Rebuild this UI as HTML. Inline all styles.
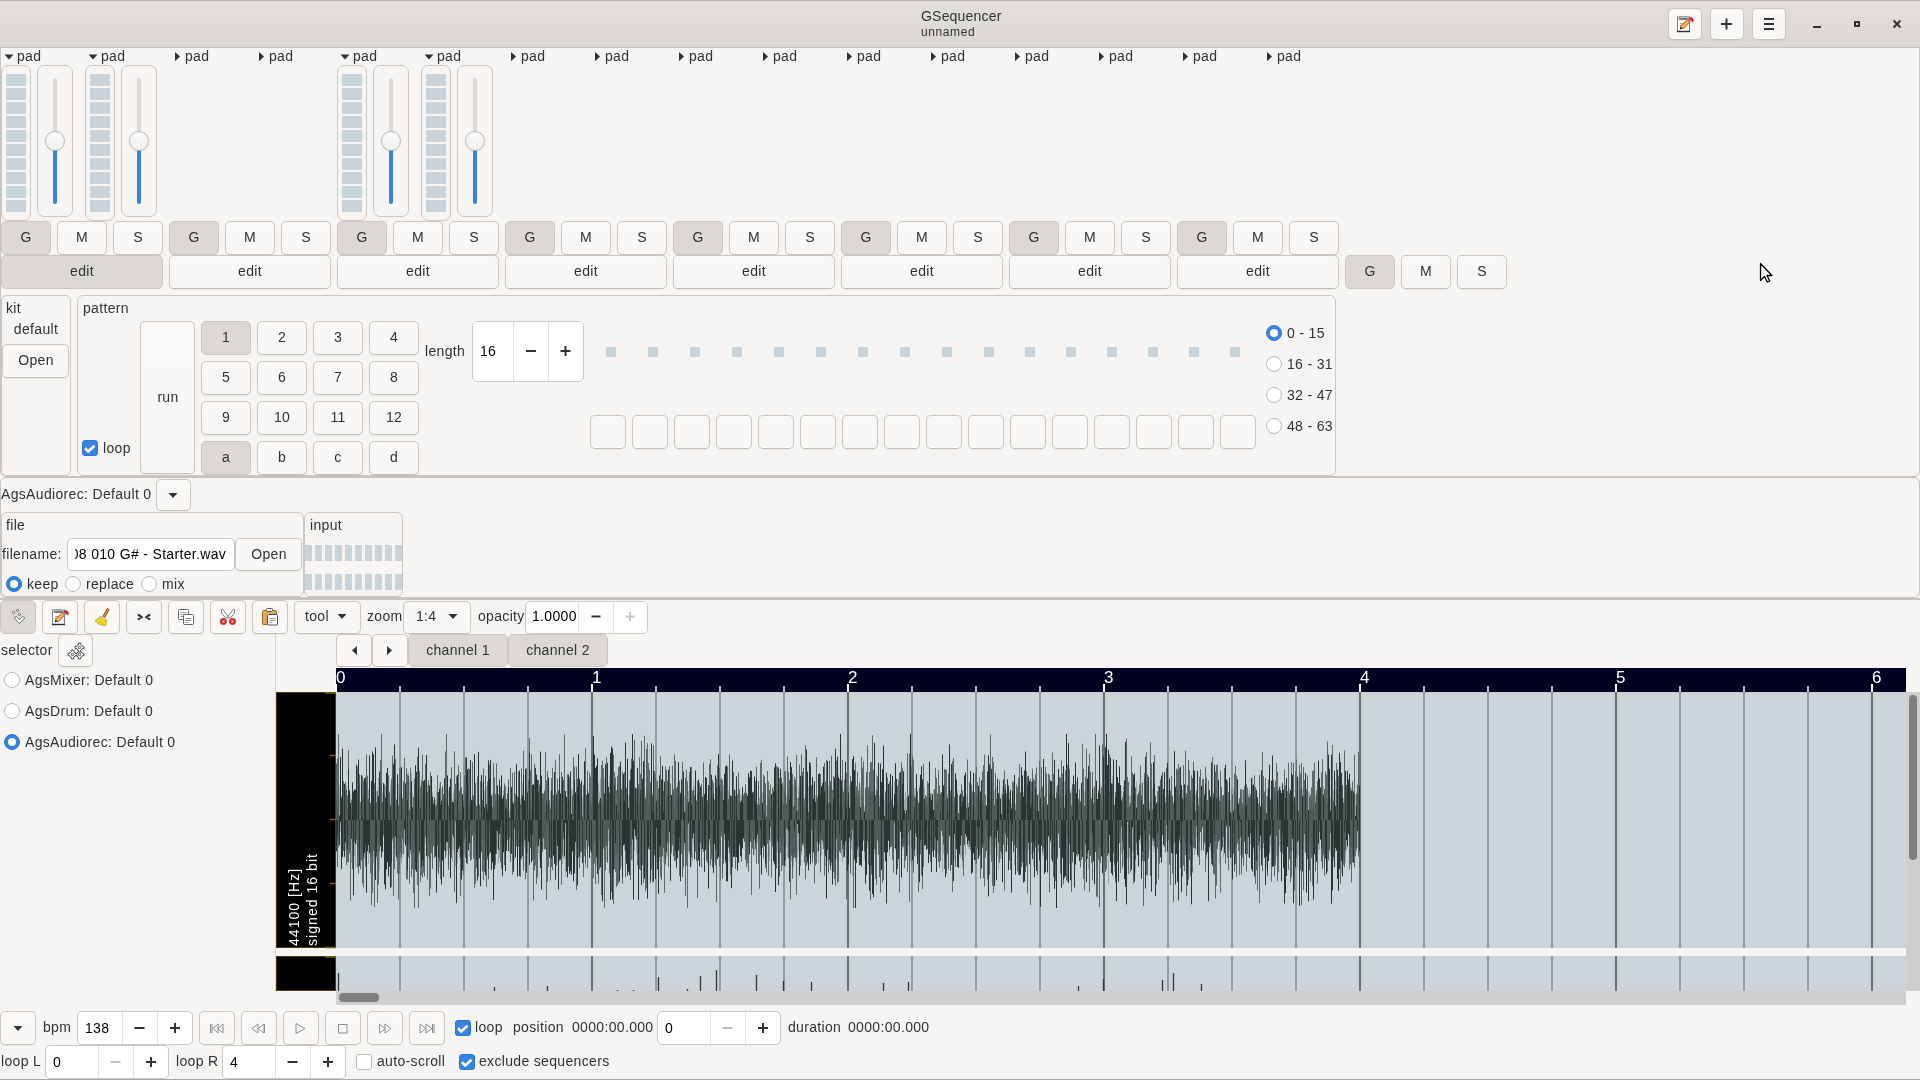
<!DOCTYPE html><html><head><meta charset="utf-8"><style>
*{margin:0;padding:0;box-sizing:border-box}
html,body{width:1920px;height:1080px;overflow:hidden;background:#f6f5f4;font-family:"Liberation Sans",sans-serif;color:#2e3436}
div{position:absolute}
.t{white-space:pre;will-change:transform}
.btn{border:1px solid #cdc7c2;border-bottom-color:#c4beb8;border-radius:5px;background:linear-gradient(to top,#fbfbfa 1px,#f8f7f6 1px,#f9f8f7);box-shadow:0 1px 1px rgba(0,0,0,0.05)}
.chk{background:#dcd8d4;border-color:#cdc7c2;box-shadow:none}
.frame{border:1px solid #cdc7c2;border-radius:6px}
.entry{border:1px solid #cdc7c2;border-radius:5px;background:#fff}
.vsep{width:1px;background:#e4e1de}
.led{background:#c9d3da}
svg{position:absolute;overflow:visible}
</style></head><body>
<div class="" style="left:0px;top:0px;width:1920px;height:48px;background:linear-gradient(to bottom,#e2dfdc,#dbd7d3);border-bottom:1px solid #c4beb8;border-top:1px solid #b1adaa"></div>
<div class="t" style="left:921px;top:9.15px;font-size:14px;line-height:14px;color:#2e3436;letter-spacing:0.2px;">GSequencer</div>
<div class="t" style="left:921px;top:25.84px;font-size:12px;line-height:12px;color:#2e3436;letter-spacing:0.6px;">unnamed</div>
<div class="btn" style="left:1668px;top:8px;width:34px;height:32px;"></div>
<div class="btn" style="left:1710px;top:8px;width:34px;height:32px;"></div>
<div class="btn" style="left:1752px;top:8px;width:34px;height:32px;"></div>
<svg style="left:0;top:0" width="1920" height="48"><path d="M1721 24h11M1726.5 18.5v11" stroke="#2e3436" stroke-width="2"/><path d="M1764 19h10M1764 24h10M1764 29h10" stroke="#2e3436" stroke-width="2"/><path d="M1813 27h8" stroke="#2e3436" stroke-width="2"/><rect x="1855" y="22" width="4" height="4" fill="none" stroke="#2e3436" stroke-width="2"/><path d="M1893.5 20.5l7 7M1900.5 20.5l-7 7" stroke="#2e3436" stroke-width="2"/></svg>
<div class="frame" style="left:0px;top:47px;width:1920px;height:430px;border-color:#c8c3be;border-top-left-radius:0;border-top-right-radius:0"></div>
<div class="frame" style="left:0px;top:477px;width:1920px;height:121px;border-color:#c8c3be"></div>
<div class="" style="left:0px;top:1079px;width:1920px;height:1px;background:#a8a8a8"></div>
<svg style="left:0;top:0" width="1920" height="300"><path d="M4.5 54.4h9l-4.5 5z" fill="#2e3436"/><path d="M88.5 54.4h9l-4.5 5z" fill="#2e3436"/><path d="M175 52v9.2l5-4.6z" fill="#2e3436"/><path d="M259 52v9.2l5-4.6z" fill="#2e3436"/><path d="M340.5 54.4h9l-4.5 5z" fill="#2e3436"/><path d="M424.5 54.4h9l-4.5 5z" fill="#2e3436"/><path d="M511 52v9.2l5-4.6z" fill="#2e3436"/><path d="M595 52v9.2l5-4.6z" fill="#2e3436"/><path d="M679 52v9.2l5-4.6z" fill="#2e3436"/><path d="M763 52v9.2l5-4.6z" fill="#2e3436"/><path d="M847 52v9.2l5-4.6z" fill="#2e3436"/><path d="M931 52v9.2l5-4.6z" fill="#2e3436"/><path d="M1015 52v9.2l5-4.6z" fill="#2e3436"/><path d="M1099 52v9.2l5-4.6z" fill="#2e3436"/><path d="M1183 52v9.2l5-4.6z" fill="#2e3436"/><path d="M1267 52v9.2l5-4.6z" fill="#2e3436"/></svg>
<div class="t" style="left:16.8px;top:49.15px;font-size:14px;line-height:14px;color:#2e3436;letter-spacing:0.33px;">pad</div>
<div class="frame" style="left:1px;top:65px;width:30px;height:156px;border-radius:7px"></div>
<div class="led" style="left:6px;top:74px;width:20px;height:12px;"></div>
<div class="led" style="left:6px;top:88px;width:20px;height:12px;"></div>
<div class="led" style="left:6px;top:102px;width:20px;height:12px;"></div>
<div class="led" style="left:6px;top:116px;width:20px;height:12px;"></div>
<div class="led" style="left:6px;top:130px;width:20px;height:12px;"></div>
<div class="led" style="left:6px;top:144px;width:20px;height:12px;"></div>
<div class="led" style="left:6px;top:158px;width:20px;height:12px;"></div>
<div class="led" style="left:6px;top:172px;width:20px;height:12px;"></div>
<div class="led" style="left:6px;top:186px;width:20px;height:12px;"></div>
<div class="led" style="left:6px;top:200px;width:20px;height:12px;"></div>
<div class="frame" style="left:37px;top:65px;width:36px;height:152px;border-radius:7px"></div>
<div class="" style="left:53px;top:78px;width:4px;height:126px;background:#dedad7;border-radius:2px"></div>
<div class="" style="left:53px;top:141px;width:4px;height:63px;background:#3584e4;border-radius:2px"></div>
<div class="" style="left:45px;top:131px;width:20px;height:20px;border-radius:50%;border:1px solid #bfb8b1;background:linear-gradient(to bottom,#fafafa,#f1f0ee);box-shadow:0 1px 1px rgba(0,0,0,0.08)"></div>
<div class="t" style="left:100.8px;top:49.15px;font-size:14px;line-height:14px;color:#2e3436;letter-spacing:0.33px;">pad</div>
<div class="frame" style="left:85px;top:65px;width:30px;height:156px;border-radius:7px"></div>
<div class="led" style="left:90px;top:74px;width:20px;height:12px;"></div>
<div class="led" style="left:90px;top:88px;width:20px;height:12px;"></div>
<div class="led" style="left:90px;top:102px;width:20px;height:12px;"></div>
<div class="led" style="left:90px;top:116px;width:20px;height:12px;"></div>
<div class="led" style="left:90px;top:130px;width:20px;height:12px;"></div>
<div class="led" style="left:90px;top:144px;width:20px;height:12px;"></div>
<div class="led" style="left:90px;top:158px;width:20px;height:12px;"></div>
<div class="led" style="left:90px;top:172px;width:20px;height:12px;"></div>
<div class="led" style="left:90px;top:186px;width:20px;height:12px;"></div>
<div class="led" style="left:90px;top:200px;width:20px;height:12px;"></div>
<div class="frame" style="left:121px;top:65px;width:36px;height:152px;border-radius:7px"></div>
<div class="" style="left:137px;top:78px;width:4px;height:126px;background:#dedad7;border-radius:2px"></div>
<div class="" style="left:137px;top:141px;width:4px;height:63px;background:#3584e4;border-radius:2px"></div>
<div class="" style="left:129px;top:131px;width:20px;height:20px;border-radius:50%;border:1px solid #bfb8b1;background:linear-gradient(to bottom,#fafafa,#f1f0ee);box-shadow:0 1px 1px rgba(0,0,0,0.08)"></div>
<div class="t" style="left:184.8px;top:49.15px;font-size:14px;line-height:14px;color:#2e3436;letter-spacing:0.33px;">pad</div>
<div class="t" style="left:268.8px;top:49.15px;font-size:14px;line-height:14px;color:#2e3436;letter-spacing:0.33px;">pad</div>
<div class="t" style="left:352.8px;top:49.15px;font-size:14px;line-height:14px;color:#2e3436;letter-spacing:0.33px;">pad</div>
<div class="frame" style="left:337px;top:65px;width:30px;height:156px;border-radius:7px"></div>
<div class="led" style="left:342px;top:74px;width:20px;height:12px;"></div>
<div class="led" style="left:342px;top:88px;width:20px;height:12px;"></div>
<div class="led" style="left:342px;top:102px;width:20px;height:12px;"></div>
<div class="led" style="left:342px;top:116px;width:20px;height:12px;"></div>
<div class="led" style="left:342px;top:130px;width:20px;height:12px;"></div>
<div class="led" style="left:342px;top:144px;width:20px;height:12px;"></div>
<div class="led" style="left:342px;top:158px;width:20px;height:12px;"></div>
<div class="led" style="left:342px;top:172px;width:20px;height:12px;"></div>
<div class="led" style="left:342px;top:186px;width:20px;height:12px;"></div>
<div class="led" style="left:342px;top:200px;width:20px;height:12px;"></div>
<div class="frame" style="left:373px;top:65px;width:36px;height:152px;border-radius:7px"></div>
<div class="" style="left:389px;top:78px;width:4px;height:126px;background:#dedad7;border-radius:2px"></div>
<div class="" style="left:389px;top:141px;width:4px;height:63px;background:#3584e4;border-radius:2px"></div>
<div class="" style="left:381px;top:131px;width:20px;height:20px;border-radius:50%;border:1px solid #bfb8b1;background:linear-gradient(to bottom,#fafafa,#f1f0ee);box-shadow:0 1px 1px rgba(0,0,0,0.08)"></div>
<div class="t" style="left:436.8px;top:49.15px;font-size:14px;line-height:14px;color:#2e3436;letter-spacing:0.33px;">pad</div>
<div class="frame" style="left:421px;top:65px;width:30px;height:156px;border-radius:7px"></div>
<div class="led" style="left:426px;top:74px;width:20px;height:12px;"></div>
<div class="led" style="left:426px;top:88px;width:20px;height:12px;"></div>
<div class="led" style="left:426px;top:102px;width:20px;height:12px;"></div>
<div class="led" style="left:426px;top:116px;width:20px;height:12px;"></div>
<div class="led" style="left:426px;top:130px;width:20px;height:12px;"></div>
<div class="led" style="left:426px;top:144px;width:20px;height:12px;"></div>
<div class="led" style="left:426px;top:158px;width:20px;height:12px;"></div>
<div class="led" style="left:426px;top:172px;width:20px;height:12px;"></div>
<div class="led" style="left:426px;top:186px;width:20px;height:12px;"></div>
<div class="led" style="left:426px;top:200px;width:20px;height:12px;"></div>
<div class="frame" style="left:457px;top:65px;width:36px;height:152px;border-radius:7px"></div>
<div class="" style="left:473px;top:78px;width:4px;height:126px;background:#dedad7;border-radius:2px"></div>
<div class="" style="left:473px;top:141px;width:4px;height:63px;background:#3584e4;border-radius:2px"></div>
<div class="" style="left:465px;top:131px;width:20px;height:20px;border-radius:50%;border:1px solid #bfb8b1;background:linear-gradient(to bottom,#fafafa,#f1f0ee);box-shadow:0 1px 1px rgba(0,0,0,0.08)"></div>
<div class="t" style="left:520.8px;top:49.15px;font-size:14px;line-height:14px;color:#2e3436;letter-spacing:0.33px;">pad</div>
<div class="t" style="left:604.8px;top:49.15px;font-size:14px;line-height:14px;color:#2e3436;letter-spacing:0.33px;">pad</div>
<div class="t" style="left:688.8px;top:49.15px;font-size:14px;line-height:14px;color:#2e3436;letter-spacing:0.33px;">pad</div>
<div class="t" style="left:772.8px;top:49.15px;font-size:14px;line-height:14px;color:#2e3436;letter-spacing:0.33px;">pad</div>
<div class="t" style="left:856.8px;top:49.15px;font-size:14px;line-height:14px;color:#2e3436;letter-spacing:0.33px;">pad</div>
<div class="t" style="left:940.8px;top:49.15px;font-size:14px;line-height:14px;color:#2e3436;letter-spacing:0.33px;">pad</div>
<div class="t" style="left:1024.8px;top:49.15px;font-size:14px;line-height:14px;color:#2e3436;letter-spacing:0.33px;">pad</div>
<div class="t" style="left:1108.8px;top:49.15px;font-size:14px;line-height:14px;color:#2e3436;letter-spacing:0.33px;">pad</div>
<div class="t" style="left:1192.8px;top:49.15px;font-size:14px;line-height:14px;color:#2e3436;letter-spacing:0.33px;">pad</div>
<div class="t" style="left:1276.8px;top:49.15px;font-size:14px;line-height:14px;color:#2e3436;letter-spacing:0.33px;">pad</div>
<div class="btn chk" style="left:1px;top:221px;width:50px;height:34px;"></div>
<div class="t" style="left:-174.0px;width:400px;text-align:center;top:230.15px;font-size:14px;line-height:14px;color:#2e3436;letter-spacing:0.33px;">G</div>
<div class="btn" style="left:57px;top:221px;width:50px;height:34px;"></div>
<div class="t" style="left:-118.0px;width:400px;text-align:center;top:230.15px;font-size:14px;line-height:14px;color:#2e3436;letter-spacing:0.33px;">M</div>
<div class="btn" style="left:113px;top:221px;width:50px;height:34px;"></div>
<div class="t" style="left:-62.0px;width:400px;text-align:center;top:230.15px;font-size:14px;line-height:14px;color:#2e3436;letter-spacing:0.33px;">S</div>
<div class="btn chk" style="left:1px;top:255px;width:162px;height:34px;"></div>
<div class="t" style="left:-118.0px;width:400px;text-align:center;top:264.15px;font-size:14px;line-height:14px;color:#2e3436;letter-spacing:0.33px;">edit</div>
<div class="btn chk" style="left:169px;top:221px;width:50px;height:34px;"></div>
<div class="t" style="left:-6.0px;width:400px;text-align:center;top:230.15px;font-size:14px;line-height:14px;color:#2e3436;letter-spacing:0.33px;">G</div>
<div class="btn" style="left:225px;top:221px;width:50px;height:34px;"></div>
<div class="t" style="left:50.0px;width:400px;text-align:center;top:230.15px;font-size:14px;line-height:14px;color:#2e3436;letter-spacing:0.33px;">M</div>
<div class="btn" style="left:281px;top:221px;width:50px;height:34px;"></div>
<div class="t" style="left:106.0px;width:400px;text-align:center;top:230.15px;font-size:14px;line-height:14px;color:#2e3436;letter-spacing:0.33px;">S</div>
<div class="btn" style="left:169px;top:255px;width:162px;height:34px;"></div>
<div class="t" style="left:50.0px;width:400px;text-align:center;top:264.15px;font-size:14px;line-height:14px;color:#2e3436;letter-spacing:0.33px;">edit</div>
<div class="btn chk" style="left:337px;top:221px;width:50px;height:34px;"></div>
<div class="t" style="left:162.0px;width:400px;text-align:center;top:230.15px;font-size:14px;line-height:14px;color:#2e3436;letter-spacing:0.33px;">G</div>
<div class="btn" style="left:393px;top:221px;width:50px;height:34px;"></div>
<div class="t" style="left:218.0px;width:400px;text-align:center;top:230.15px;font-size:14px;line-height:14px;color:#2e3436;letter-spacing:0.33px;">M</div>
<div class="btn" style="left:449px;top:221px;width:50px;height:34px;"></div>
<div class="t" style="left:274.0px;width:400px;text-align:center;top:230.15px;font-size:14px;line-height:14px;color:#2e3436;letter-spacing:0.33px;">S</div>
<div class="btn" style="left:337px;top:255px;width:162px;height:34px;"></div>
<div class="t" style="left:218.0px;width:400px;text-align:center;top:264.15px;font-size:14px;line-height:14px;color:#2e3436;letter-spacing:0.33px;">edit</div>
<div class="btn chk" style="left:505px;top:221px;width:50px;height:34px;"></div>
<div class="t" style="left:330.0px;width:400px;text-align:center;top:230.15px;font-size:14px;line-height:14px;color:#2e3436;letter-spacing:0.33px;">G</div>
<div class="btn" style="left:561px;top:221px;width:50px;height:34px;"></div>
<div class="t" style="left:386.0px;width:400px;text-align:center;top:230.15px;font-size:14px;line-height:14px;color:#2e3436;letter-spacing:0.33px;">M</div>
<div class="btn" style="left:617px;top:221px;width:50px;height:34px;"></div>
<div class="t" style="left:442.0px;width:400px;text-align:center;top:230.15px;font-size:14px;line-height:14px;color:#2e3436;letter-spacing:0.33px;">S</div>
<div class="btn" style="left:505px;top:255px;width:162px;height:34px;"></div>
<div class="t" style="left:386.0px;width:400px;text-align:center;top:264.15px;font-size:14px;line-height:14px;color:#2e3436;letter-spacing:0.33px;">edit</div>
<div class="btn chk" style="left:673px;top:221px;width:50px;height:34px;"></div>
<div class="t" style="left:498.0px;width:400px;text-align:center;top:230.15px;font-size:14px;line-height:14px;color:#2e3436;letter-spacing:0.33px;">G</div>
<div class="btn" style="left:729px;top:221px;width:50px;height:34px;"></div>
<div class="t" style="left:554.0px;width:400px;text-align:center;top:230.15px;font-size:14px;line-height:14px;color:#2e3436;letter-spacing:0.33px;">M</div>
<div class="btn" style="left:785px;top:221px;width:50px;height:34px;"></div>
<div class="t" style="left:610.0px;width:400px;text-align:center;top:230.15px;font-size:14px;line-height:14px;color:#2e3436;letter-spacing:0.33px;">S</div>
<div class="btn" style="left:673px;top:255px;width:162px;height:34px;"></div>
<div class="t" style="left:554.0px;width:400px;text-align:center;top:264.15px;font-size:14px;line-height:14px;color:#2e3436;letter-spacing:0.33px;">edit</div>
<div class="btn chk" style="left:841px;top:221px;width:50px;height:34px;"></div>
<div class="t" style="left:666.0px;width:400px;text-align:center;top:230.15px;font-size:14px;line-height:14px;color:#2e3436;letter-spacing:0.33px;">G</div>
<div class="btn" style="left:897px;top:221px;width:50px;height:34px;"></div>
<div class="t" style="left:722.0px;width:400px;text-align:center;top:230.15px;font-size:14px;line-height:14px;color:#2e3436;letter-spacing:0.33px;">M</div>
<div class="btn" style="left:953px;top:221px;width:50px;height:34px;"></div>
<div class="t" style="left:778.0px;width:400px;text-align:center;top:230.15px;font-size:14px;line-height:14px;color:#2e3436;letter-spacing:0.33px;">S</div>
<div class="btn" style="left:841px;top:255px;width:162px;height:34px;"></div>
<div class="t" style="left:722.0px;width:400px;text-align:center;top:264.15px;font-size:14px;line-height:14px;color:#2e3436;letter-spacing:0.33px;">edit</div>
<div class="btn chk" style="left:1009px;top:221px;width:50px;height:34px;"></div>
<div class="t" style="left:834.0px;width:400px;text-align:center;top:230.15px;font-size:14px;line-height:14px;color:#2e3436;letter-spacing:0.33px;">G</div>
<div class="btn" style="left:1065px;top:221px;width:50px;height:34px;"></div>
<div class="t" style="left:890.0px;width:400px;text-align:center;top:230.15px;font-size:14px;line-height:14px;color:#2e3436;letter-spacing:0.33px;">M</div>
<div class="btn" style="left:1121px;top:221px;width:50px;height:34px;"></div>
<div class="t" style="left:946.0px;width:400px;text-align:center;top:230.15px;font-size:14px;line-height:14px;color:#2e3436;letter-spacing:0.33px;">S</div>
<div class="btn" style="left:1009px;top:255px;width:162px;height:34px;"></div>
<div class="t" style="left:890.0px;width:400px;text-align:center;top:264.15px;font-size:14px;line-height:14px;color:#2e3436;letter-spacing:0.33px;">edit</div>
<div class="btn chk" style="left:1177px;top:221px;width:50px;height:34px;"></div>
<div class="t" style="left:1002.0px;width:400px;text-align:center;top:230.15px;font-size:14px;line-height:14px;color:#2e3436;letter-spacing:0.33px;">G</div>
<div class="btn" style="left:1233px;top:221px;width:50px;height:34px;"></div>
<div class="t" style="left:1058.0px;width:400px;text-align:center;top:230.15px;font-size:14px;line-height:14px;color:#2e3436;letter-spacing:0.33px;">M</div>
<div class="btn" style="left:1289px;top:221px;width:50px;height:34px;"></div>
<div class="t" style="left:1114.0px;width:400px;text-align:center;top:230.15px;font-size:14px;line-height:14px;color:#2e3436;letter-spacing:0.33px;">S</div>
<div class="btn" style="left:1177px;top:255px;width:162px;height:34px;"></div>
<div class="t" style="left:1058.0px;width:400px;text-align:center;top:264.15px;font-size:14px;line-height:14px;color:#2e3436;letter-spacing:0.33px;">edit</div>
<div class="btn chk" style="left:1345px;top:255px;width:50px;height:34px;"></div>
<div class="t" style="left:1170.0px;width:400px;text-align:center;top:264.15px;font-size:14px;line-height:14px;color:#2e3436;letter-spacing:0.33px;">G</div>
<div class="btn" style="left:1401px;top:255px;width:50px;height:34px;"></div>
<div class="t" style="left:1226.0px;width:400px;text-align:center;top:264.15px;font-size:14px;line-height:14px;color:#2e3436;letter-spacing:0.33px;">M</div>
<div class="btn" style="left:1457px;top:255px;width:50px;height:34px;"></div>
<div class="t" style="left:1282.0px;width:400px;text-align:center;top:264.15px;font-size:14px;line-height:14px;color:#2e3436;letter-spacing:0.33px;">S</div>
<svg style="left:0;top:0" width="1920" height="300"><path d="M1760.5 263.5V280.5L1764.5 276.5L1767.3 282L1769.8 281L1767 275.5H1772Z" fill="#fff" stroke="#000" stroke-width="1.3" stroke-linejoin="round"/></svg>
<div class="frame" style="left:1px;top:295px;width:70px;height:181px;"></div>
<div class="t" style="left:6px;top:301.15px;font-size:14px;line-height:14px;color:#2e3436;letter-spacing:0.33px;">kit</div>
<div class="t" style="left:-164px;width:400px;text-align:center;top:322.15px;font-size:14px;line-height:14px;color:#2e3436;letter-spacing:0.33px;">default</div>
<div class="btn" style="left:2px;top:344px;width:67px;height:34px;"></div>
<div class="t" style="left:-164.5px;width:400px;text-align:center;top:353.15px;font-size:14px;line-height:14px;color:#2e3436;letter-spacing:0.33px;">Open</div>
<div class="frame" style="left:77px;top:295px;width:1259px;height:181px;"></div>
<div class="t" style="left:82.5px;top:301.15px;font-size:14px;line-height:14px;color:#2e3436;letter-spacing:0.33px;">pattern</div>
<div class="btn" style="left:140px;top:321px;width:55px;height:153px;"></div>
<div class="t" style="left:-32.5px;width:400px;text-align:center;top:389.65px;font-size:14px;line-height:14px;color:#2e3436;letter-spacing:0.33px;">run</div>
<div class="" style="left:82px;top:440px;width:16px;height:16px;background:#3584e4;border-radius:3px;border:1px solid #2a76d6"></div>
<svg style="left:82px;top:440px" width="16" height="16"><path d="M3 8.2l3.2 3.2 6.3-5.7" fill="none" stroke="#fff" stroke-width="2.7"/></svg>
<div class="t" style="left:102.5px;top:441.15px;font-size:14px;line-height:14px;color:#2e3436;letter-spacing:0.33px;">loop</div>
<div class="btn chk" style="left:201px;top:321px;width:50px;height:34px;"></div>
<div class="t" style="left:26.0px;width:400px;text-align:center;top:330.15px;font-size:14px;line-height:14px;color:#2e3436;letter-spacing:0.33px;">1</div>
<div class="btn" style="left:257px;top:321px;width:50px;height:34px;"></div>
<div class="t" style="left:82.0px;width:400px;text-align:center;top:330.15px;font-size:14px;line-height:14px;color:#2e3436;letter-spacing:0.33px;">2</div>
<div class="btn" style="left:313px;top:321px;width:50px;height:34px;"></div>
<div class="t" style="left:138.0px;width:400px;text-align:center;top:330.15px;font-size:14px;line-height:14px;color:#2e3436;letter-spacing:0.33px;">3</div>
<div class="btn" style="left:369px;top:321px;width:50px;height:34px;"></div>
<div class="t" style="left:194.0px;width:400px;text-align:center;top:330.15px;font-size:14px;line-height:14px;color:#2e3436;letter-spacing:0.33px;">4</div>
<div class="btn" style="left:201px;top:361px;width:50px;height:34px;"></div>
<div class="t" style="left:26.0px;width:400px;text-align:center;top:370.15px;font-size:14px;line-height:14px;color:#2e3436;letter-spacing:0.33px;">5</div>
<div class="btn" style="left:257px;top:361px;width:50px;height:34px;"></div>
<div class="t" style="left:82.0px;width:400px;text-align:center;top:370.15px;font-size:14px;line-height:14px;color:#2e3436;letter-spacing:0.33px;">6</div>
<div class="btn" style="left:313px;top:361px;width:50px;height:34px;"></div>
<div class="t" style="left:138.0px;width:400px;text-align:center;top:370.15px;font-size:14px;line-height:14px;color:#2e3436;letter-spacing:0.33px;">7</div>
<div class="btn" style="left:369px;top:361px;width:50px;height:34px;"></div>
<div class="t" style="left:194.0px;width:400px;text-align:center;top:370.15px;font-size:14px;line-height:14px;color:#2e3436;letter-spacing:0.33px;">8</div>
<div class="btn" style="left:201px;top:401px;width:50px;height:34px;"></div>
<div class="t" style="left:26.0px;width:400px;text-align:center;top:410.15px;font-size:14px;line-height:14px;color:#2e3436;letter-spacing:0.33px;">9</div>
<div class="btn" style="left:257px;top:401px;width:50px;height:34px;"></div>
<div class="t" style="left:82.0px;width:400px;text-align:center;top:410.15px;font-size:14px;line-height:14px;color:#2e3436;letter-spacing:0.33px;">10</div>
<div class="btn" style="left:313px;top:401px;width:50px;height:34px;"></div>
<div class="t" style="left:138.0px;width:400px;text-align:center;top:410.15px;font-size:14px;line-height:14px;color:#2e3436;letter-spacing:0.33px;">11</div>
<div class="btn" style="left:369px;top:401px;width:50px;height:34px;"></div>
<div class="t" style="left:194.0px;width:400px;text-align:center;top:410.15px;font-size:14px;line-height:14px;color:#2e3436;letter-spacing:0.33px;">12</div>
<div class="btn chk" style="left:201px;top:441px;width:50px;height:34px;"></div>
<div class="t" style="left:26.0px;width:400px;text-align:center;top:450.15px;font-size:14px;line-height:14px;color:#2e3436;letter-spacing:0.33px;">a</div>
<div class="btn" style="left:257px;top:441px;width:50px;height:34px;"></div>
<div class="t" style="left:82.0px;width:400px;text-align:center;top:450.15px;font-size:14px;line-height:14px;color:#2e3436;letter-spacing:0.33px;">b</div>
<div class="btn" style="left:313px;top:441px;width:50px;height:34px;"></div>
<div class="t" style="left:138.0px;width:400px;text-align:center;top:450.15px;font-size:14px;line-height:14px;color:#2e3436;letter-spacing:0.33px;">c</div>
<div class="btn" style="left:369px;top:441px;width:50px;height:34px;"></div>
<div class="t" style="left:194.0px;width:400px;text-align:center;top:450.15px;font-size:14px;line-height:14px;color:#2e3436;letter-spacing:0.33px;">d</div>
<div class="t" style="left:425px;top:344.15px;font-size:14px;line-height:14px;color:#2e3436;letter-spacing:0.33px;">length</div>
<div class="entry" style="left:472px;top:321px;width:112px;height:61px;"></div>
<div class="vsep" style="left:513px;top:322px;width:1px;height:59px;"></div>
<div class="vsep" style="left:548px;top:322px;width:1px;height:59px;"></div>
<div class="t" style="left:479.5px;top:344.15px;font-size:14px;line-height:14px;color:#000;letter-spacing:0.33px;">16</div>
<svg style="left:0;top:0" width="600" height="400"><path d="M526 351h10M560.5 351h10M565.5 346v10" stroke="#2e3436" stroke-width="2"/></svg>
<div class="led" style="left:606px;top:347px;width:10px;height:10px;"></div>
<div class="btn" style="left:590px;top:415px;width:36px;height:34px;"></div>
<div class="led" style="left:648px;top:347px;width:10px;height:10px;"></div>
<div class="btn" style="left:632px;top:415px;width:36px;height:34px;"></div>
<div class="led" style="left:690px;top:347px;width:10px;height:10px;"></div>
<div class="btn" style="left:674px;top:415px;width:36px;height:34px;"></div>
<div class="led" style="left:732px;top:347px;width:10px;height:10px;"></div>
<div class="btn" style="left:716px;top:415px;width:36px;height:34px;"></div>
<div class="led" style="left:774px;top:347px;width:10px;height:10px;"></div>
<div class="btn" style="left:758px;top:415px;width:36px;height:34px;"></div>
<div class="led" style="left:816px;top:347px;width:10px;height:10px;"></div>
<div class="btn" style="left:800px;top:415px;width:36px;height:34px;"></div>
<div class="led" style="left:858px;top:347px;width:10px;height:10px;"></div>
<div class="btn" style="left:842px;top:415px;width:36px;height:34px;"></div>
<div class="led" style="left:900px;top:347px;width:10px;height:10px;"></div>
<div class="btn" style="left:884px;top:415px;width:36px;height:34px;"></div>
<div class="led" style="left:942px;top:347px;width:10px;height:10px;"></div>
<div class="btn" style="left:926px;top:415px;width:36px;height:34px;"></div>
<div class="led" style="left:984px;top:347px;width:10px;height:10px;"></div>
<div class="btn" style="left:968px;top:415px;width:36px;height:34px;"></div>
<div class="led" style="left:1025px;top:347px;width:10px;height:10px;"></div>
<div class="btn" style="left:1010px;top:415px;width:36px;height:34px;"></div>
<div class="led" style="left:1066px;top:347px;width:10px;height:10px;"></div>
<div class="btn" style="left:1052px;top:415px;width:36px;height:34px;"></div>
<div class="led" style="left:1107px;top:347px;width:10px;height:10px;"></div>
<div class="btn" style="left:1094px;top:415px;width:36px;height:34px;"></div>
<div class="led" style="left:1148px;top:347px;width:10px;height:10px;"></div>
<div class="btn" style="left:1136px;top:415px;width:36px;height:34px;"></div>
<div class="led" style="left:1189px;top:347px;width:10px;height:10px;"></div>
<div class="btn" style="left:1178px;top:415px;width:36px;height:34px;"></div>
<div class="led" style="left:1230px;top:347px;width:10px;height:10px;"></div>
<div class="btn" style="left:1220px;top:415px;width:36px;height:34px;"></div>
<div class="" style="left:1266px;top:325px;width:16px;height:16px;border-radius:50%;background:#3584e4;border:1px solid #2a76d6"></div>
<div class="" style="left:1270px;top:329px;width:8px;height:8px;border-radius:50%;background:#fff"></div>
<div class="t" style="left:1287px;top:326.15px;font-size:14px;line-height:14px;color:#2e3436;letter-spacing:0.33px;">0 - 15</div>
<div class="" style="left:1266px;top:356px;width:16px;height:16px;border-radius:50%;background:#fff;border:1px solid #bfb8b1"></div>
<div class="t" style="left:1287px;top:357.15px;font-size:14px;line-height:14px;color:#2e3436;letter-spacing:0.33px;">16 - 31</div>
<div class="" style="left:1266px;top:387px;width:16px;height:16px;border-radius:50%;background:#fff;border:1px solid #bfb8b1"></div>
<div class="t" style="left:1287px;top:388.15px;font-size:14px;line-height:14px;color:#2e3436;letter-spacing:0.33px;">32 - 47</div>
<div class="" style="left:1266px;top:418px;width:16px;height:16px;border-radius:50%;background:#fff;border:1px solid #bfb8b1"></div>
<div class="t" style="left:1287px;top:419.15px;font-size:14px;line-height:14px;color:#2e3436;letter-spacing:0.33px;">48 - 63</div>
<div class="t" style="left:1px;top:486.65px;font-size:14px;line-height:14px;color:#2e3436;letter-spacing:0.33px;">AgsAudiorec: Default 0</div>
<div class="btn" style="left:156px;top:479px;width:35px;height:32px;"></div>
<svg style="left:0;top:0" width="400" height="520"><path d="M168.5 493h9l-4.5 5z" fill="#2e3436"/></svg>
<div class="frame" style="left:1px;top:512px;width:303px;height:85px;"></div>
<div class="t" style="left:6px;top:518.15px;font-size:14px;line-height:14px;color:#2e3436;letter-spacing:0.33px;">file</div>
<div class="t" style="left:2px;top:547.15px;font-size:14px;line-height:14px;color:#2e3436;letter-spacing:0.33px;">filename:</div>
<div class="entry" style="left:67px;top:538px;width:168px;height:33px;overflow:hidden"></div>
<div class="t" style="left:75px;top:541px;width:157px;height:26px;overflow:hidden"><div class="t" style="right:6px;top:6px;font-size:14px;line-height:14px;letter-spacing:0.33px;color:#000">03 0008 010 G# - Starter.wav</div></div>
<div class="btn" style="left:235px;top:538px;width:67px;height:33px;"></div>
<div class="t" style="left:68.5px;width:400px;text-align:center;top:546.65px;font-size:14px;line-height:14px;color:#2e3436;letter-spacing:0.33px;">Open</div>
<div class="" style="left:6px;top:576px;width:16px;height:16px;border-radius:50%;background:#3584e4;border:1px solid #2a76d6"></div>
<div class="" style="left:10px;top:580px;width:8px;height:8px;border-radius:50%;background:#fff"></div>
<div class="t" style="left:26.5px;top:577.15px;font-size:14px;line-height:14px;color:#2e3436;letter-spacing:0.33px;">keep</div>
<div class="" style="left:65px;top:576px;width:16px;height:16px;border-radius:50%;background:#fff;border:1px solid #bfb8b1"></div>
<div class="t" style="left:85.5px;top:577.15px;font-size:14px;line-height:14px;color:#2e3436;letter-spacing:0.33px;">replace</div>
<div class="" style="left:141px;top:576px;width:16px;height:16px;border-radius:50%;background:#fff;border:1px solid #bfb8b1"></div>
<div class="t" style="left:161.5px;top:577.15px;font-size:14px;line-height:14px;color:#2e3436;letter-spacing:0.33px;">mix</div>
<div class="frame" style="left:304px;top:512px;width:99px;height:85px;"></div>
<div class="t" style="left:309.5px;top:518.15px;font-size:14px;line-height:14px;color:#2e3436;letter-spacing:0.33px;">input</div>
<div class="led" style="left:305px;top:545px;width:7px;height:16px;"></div>
<div class="led" style="left:305px;top:574px;width:7px;height:16px;"></div>
<div class="led" style="left:315px;top:545px;width:7px;height:16px;"></div>
<div class="led" style="left:315px;top:574px;width:7px;height:16px;"></div>
<div class="led" style="left:325px;top:545px;width:7px;height:16px;"></div>
<div class="led" style="left:325px;top:574px;width:7px;height:16px;"></div>
<div class="led" style="left:335px;top:545px;width:7px;height:16px;"></div>
<div class="led" style="left:335px;top:574px;width:7px;height:16px;"></div>
<div class="led" style="left:345px;top:545px;width:7px;height:16px;"></div>
<div class="led" style="left:345px;top:574px;width:7px;height:16px;"></div>
<div class="led" style="left:355px;top:545px;width:7px;height:16px;"></div>
<div class="led" style="left:355px;top:574px;width:7px;height:16px;"></div>
<div class="led" style="left:365px;top:545px;width:7px;height:16px;"></div>
<div class="led" style="left:365px;top:574px;width:7px;height:16px;"></div>
<div class="led" style="left:375px;top:545px;width:7px;height:16px;"></div>
<div class="led" style="left:375px;top:574px;width:7px;height:16px;"></div>
<div class="led" style="left:385px;top:545px;width:7px;height:16px;"></div>
<div class="led" style="left:385px;top:574px;width:7px;height:16px;"></div>
<div class="led" style="left:395px;top:545px;width:7px;height:16px;"></div>
<div class="led" style="left:395px;top:574px;width:7px;height:16px;"></div>
<div class="" style="left:0px;top:598px;width:1920px;height:2px;background:#c9c4be"></div>
<div class="btn chk" style="left:0px;top:600px;width:36px;height:34px;"></div>
<div class="btn" style="left:42px;top:600px;width:36px;height:34px;"></div>
<div class="btn" style="left:84px;top:600px;width:36px;height:34px;"></div>
<div class="btn" style="left:126px;top:600px;width:36px;height:34px;"></div>
<div class="btn" style="left:168px;top:600px;width:36px;height:34px;"></div>
<div class="btn" style="left:210px;top:600px;width:36px;height:34px;"></div>
<div class="btn" style="left:252px;top:600px;width:36px;height:34px;"></div>
<div class="btn" style="left:294px;top:601px;width:67px;height:33px;"></div>
<div class="t" style="left:305px;top:609.15px;font-size:14px;line-height:14px;color:#2e3436;letter-spacing:0.33px;">tool</div>
<div class="t" style="left:367px;top:609.15px;font-size:14px;line-height:14px;color:#2e3436;letter-spacing:0.33px;">zoom</div>
<div class="btn" style="left:403px;top:601px;width:68px;height:33px;"></div>
<div class="t" style="left:415.5px;top:609.15px;font-size:14px;line-height:14px;color:#2e3436;letter-spacing:0.33px;">1:4</div>
<svg style="left:0;top:0" width="700" height="700"><path d="M337.5 614h9l-4.5 5zM448.5 614h9l-4.5 5z" fill="#2e3436"/></svg>
<div class="t" style="left:477.5px;top:609.15px;font-size:14px;line-height:14px;color:#2e3436;letter-spacing:0.33px;">opacity</div>
<div class="entry" style="left:525px;top:601px;width:123px;height:33px;"></div>
<div class="vsep" style="left:578px;top:602px;width:1px;height:31px;"></div>
<div class="vsep" style="left:613px;top:602px;width:1px;height:31px;"></div>
<div class="t" style="left:532px;top:609.15px;font-size:14px;line-height:14px;color:#000;letter-spacing:0.33px;">1.0000</div>
<svg style="left:0;top:0" width="700" height="700"><path d="M591.5 616.5h9" stroke="#2e3436" stroke-width="2"/><path d="M625.5 616.5h9M630 612v9" stroke="#c8c6c4" stroke-width="2"/></svg>
<div class="t" style="left:0.5px;top:643.15px;font-size:14px;line-height:14px;color:#2e3436;letter-spacing:0.33px;">selector</div>
<div class="btn" style="left:58px;top:634px;width:35px;height:33px;"></div>
<div class="btn" style="left:336px;top:634px;width:36px;height:33px;"></div>
<div class="btn" style="left:372px;top:634px;width:36px;height:33px;"></div>
<div class="btn chk" style="left:408px;top:634px;width:100px;height:33px;"></div>
<div class="t" style="left:258.0px;width:400px;text-align:center;top:642.65px;font-size:14px;line-height:14px;color:#2e3436;letter-spacing:0.33px;">channel 1</div>
<div class="btn chk" style="left:508px;top:634px;width:100px;height:33px;"></div>
<div class="t" style="left:358.0px;width:400px;text-align:center;top:642.65px;font-size:14px;line-height:14px;color:#2e3436;letter-spacing:0.33px;">channel 2</div>
<svg style="left:0;top:0" width="700" height="700"><path d="M357 646v9l-5-4.5zM387 646l5 4.5l-5 4.5z" fill="#2e3436"/></svg>
<div class="" style="left:275px;top:634px;width:1px;height:357px;background:#d5d1cd"></div>
<div class="" style="left:4px;top:672px;width:16px;height:16px;border-radius:50%;background:#fff;border:1px solid #bfb8b1"></div>
<div class="t" style="left:24.5px;top:673.15px;font-size:14px;line-height:14px;color:#2e3436;letter-spacing:0.33px;">AgsMixer: Default 0</div>
<div class="" style="left:4px;top:703px;width:16px;height:16px;border-radius:50%;background:#fff;border:1px solid #bfb8b1"></div>
<div class="t" style="left:24.5px;top:704.15px;font-size:14px;line-height:14px;color:#2e3436;letter-spacing:0.33px;">AgsDrum: Default 0</div>
<div class="" style="left:4px;top:734px;width:16px;height:16px;border-radius:50%;background:#3584e4;border:1px solid #2a76d6"></div>
<div class="" style="left:8px;top:738px;width:8px;height:8px;border-radius:50%;background:#fff"></div>
<div class="t" style="left:24.5px;top:735.15px;font-size:14px;line-height:14px;color:#2e3436;letter-spacing:0.33px;">AgsAudiorec: Default 0</div>
<div class="btn" style="left:0px;top:1011px;width:36px;height:34px;"></div>
<svg style="left:0;top:0" width="1000" height="1080"><path d="M13.5 1026h9l-4.5 5z" fill="#2e3436"/></svg>
<div class="t" style="left:42.5px;top:1020.15px;font-size:14px;line-height:14px;color:#2e3436;letter-spacing:0.33px;">bpm</div>
<div class="entry" style="left:77px;top:1011px;width:116px;height:34px;"></div>
<div class="vsep" style="left:122px;top:1012px;width:1px;height:32px;"></div>
<div class="vsep" style="left:157px;top:1012px;width:1px;height:32px;"></div>
<div class="t" style="left:84.5px;top:1021.15px;font-size:14px;line-height:14px;color:#000;letter-spacing:0.33px;">138</div>
<svg style="left:0;top:0" width="1920" height="1080"><path d="M134.5 1028.0h10" stroke="#2e3436" stroke-width="2"/><path d="M170.0 1028.0h10M175.0 1023.0v10" stroke="#2e3436" stroke-width="2"/></svg>
<div class="btn" style="left:199px;top:1011px;width:36px;height:34px;"></div>
<div class="btn" style="left:241px;top:1011px;width:36px;height:34px;"></div>
<div class="btn" style="left:283px;top:1011px;width:36px;height:34px;"></div>
<div class="btn" style="left:325px;top:1011px;width:36px;height:34px;"></div>
<div class="btn" style="left:367px;top:1011px;width:36px;height:34px;"></div>
<div class="btn" style="left:409px;top:1011px;width:36px;height:34px;"></div>
<div class="" style="left:455px;top:1020px;width:16px;height:16px;background:#3584e4;border-radius:3px;border:1px solid #2a76d6"></div>
<svg style="left:455px;top:1020px" width="16" height="16"><path d="M3 8.2l3.2 3.2 6.3-5.7" fill="none" stroke="#fff" stroke-width="2.7"/></svg>
<div class="t" style="left:475px;top:1020.15px;font-size:14px;line-height:14px;color:#2e3436;letter-spacing:0.33px;">loop</div>
<div class="t" style="left:513.4px;top:1020.15px;font-size:14px;line-height:14px;color:#2e3436;letter-spacing:0.33px;">position</div>
<div class="t" style="left:571.5px;top:1020.15px;font-size:14px;line-height:14px;color:#2e3436;letter-spacing:0.33px;">0000:00.000</div>
<div class="entry" style="left:657px;top:1011px;width:124px;height:34px;"></div>
<div class="vsep" style="left:710px;top:1012px;width:1px;height:32px;"></div>
<div class="vsep" style="left:745px;top:1012px;width:1px;height:32px;"></div>
<div class="t" style="left:664.5px;top:1021.15px;font-size:14px;line-height:14px;color:#000;letter-spacing:0.33px;">0</div>
<svg style="left:0;top:0" width="1920" height="1080"><path d="M722.5 1028.0h10" stroke="#c0bdbb" stroke-width="2"/><path d="M758.0 1028.0h10M763.0 1023.0v10" stroke="#2e3436" stroke-width="2"/></svg>
<div class="t" style="left:787.6px;top:1020.15px;font-size:14px;line-height:14px;color:#2e3436;letter-spacing:0.33px;">duration</div>
<div class="t" style="left:847.5px;top:1020.15px;font-size:14px;line-height:14px;color:#2e3436;letter-spacing:0.33px;">0000:00.000</div>
<div class="t" style="left:0.5px;top:1054.15px;font-size:14px;line-height:14px;color:#2e3436;letter-spacing:0.33px;">loop L</div>
<div class="entry" style="left:45px;top:1045px;width:124px;height:34px;"></div>
<div class="vsep" style="left:98px;top:1046px;width:1px;height:32px;"></div>
<div class="vsep" style="left:133px;top:1046px;width:1px;height:32px;"></div>
<div class="t" style="left:52.5px;top:1055.15px;font-size:14px;line-height:14px;color:#000;letter-spacing:0.33px;">0</div>
<svg style="left:0;top:0" width="1920" height="1080"><path d="M110.5 1062.0h10" stroke="#c0bdbb" stroke-width="2"/><path d="M146.0 1062.0h10M151.0 1057.0v10" stroke="#2e3436" stroke-width="2"/></svg>
<div class="t" style="left:175.5px;top:1054.15px;font-size:14px;line-height:14px;color:#2e3436;letter-spacing:0.33px;">loop R</div>
<div class="entry" style="left:222px;top:1045px;width:124px;height:34px;"></div>
<div class="vsep" style="left:275px;top:1046px;width:1px;height:32px;"></div>
<div class="vsep" style="left:310px;top:1046px;width:1px;height:32px;"></div>
<div class="t" style="left:229.5px;top:1055.15px;font-size:14px;line-height:14px;color:#000;letter-spacing:0.33px;">4</div>
<svg style="left:0;top:0" width="1920" height="1080"><path d="M287.5 1062.0h10" stroke="#2e3436" stroke-width="2"/><path d="M323.0 1062.0h10M328.0 1057.0v10" stroke="#2e3436" stroke-width="2"/></svg>
<div class="" style="left:356px;top:1054px;width:16px;height:16px;background:#fff;border-radius:3px;border:1px solid #bfb8b1"></div>
<div class="t" style="left:376.5px;top:1054.15px;font-size:14px;line-height:14px;color:#2e3436;letter-spacing:0.33px;">auto-scroll</div>
<div class="" style="left:459px;top:1054px;width:16px;height:16px;background:#3584e4;border-radius:3px;border:1px solid #2a76d6"></div>
<svg style="left:459px;top:1054px" width="16" height="16"><path d="M3 8.2l3.2 3.2 6.3-5.7" fill="none" stroke="#fff" stroke-width="2.7"/></svg>
<div class="t" style="left:479px;top:1054.15px;font-size:14px;line-height:14px;color:#2e3436;letter-spacing:0.33px;">exclude sequencers</div>
<div class="" style="left:336px;top:668px;width:1570px;height:24px;background:#00011e"></div>
<div class="" style="left:276px;top:692px;width:60px;height:256px;background:#000"></div>
<div class="" style="left:276px;top:956px;width:60px;height:35px;background:#000"></div>
<div class="" style="left:336px;top:692px;width:1570px;height:256px;background:#ccd4da"></div>
<div class="" style="left:336px;top:956px;width:1570px;height:35px;background:#ccd4da"></div>
<div class="" style="left:336px;top:991px;width:1570px;height:14px;background:#cfcfcf"></div>
<div class="" style="left:1906px;top:692px;width:14px;height:299px;background:#cfcfcf"></div>
<div class="" style="left:1909px;top:695px;width:8px;height:165px;background:#7f8181;border-radius:4px"></div>
<div class="" style="left:339px;top:993px;width:40px;height:9px;background:#7f8181;border-radius:4px"></div>
<svg style="left:0;top:0" width="1920" height="1080"><rect x="335" y="684" width="2" height="8" fill="#fff"/><rect x="399" y="686" width="2" height="6" fill="#b9b9c2"/><rect x="463" y="686" width="2" height="6" fill="#b9b9c2"/><rect x="527" y="686" width="2" height="6" fill="#b9b9c2"/><rect x="591" y="684" width="2" height="8" fill="#fff"/><rect x="655" y="686" width="2" height="6" fill="#b9b9c2"/><rect x="719" y="686" width="2" height="6" fill="#b9b9c2"/><rect x="783" y="686" width="2" height="6" fill="#b9b9c2"/><rect x="847" y="684" width="2" height="8" fill="#fff"/><rect x="911" y="686" width="2" height="6" fill="#b9b9c2"/><rect x="975" y="686" width="2" height="6" fill="#b9b9c2"/><rect x="1039" y="686" width="2" height="6" fill="#b9b9c2"/><rect x="1103" y="684" width="2" height="8" fill="#fff"/><rect x="1167" y="686" width="2" height="6" fill="#b9b9c2"/><rect x="1231" y="686" width="2" height="6" fill="#b9b9c2"/><rect x="1295" y="686" width="2" height="6" fill="#b9b9c2"/><rect x="1359" y="684" width="2" height="8" fill="#fff"/><rect x="1423" y="686" width="2" height="6" fill="#b9b9c2"/><rect x="1487" y="686" width="2" height="6" fill="#b9b9c2"/><rect x="1551" y="686" width="2" height="6" fill="#b9b9c2"/><rect x="1615" y="684" width="2" height="8" fill="#fff"/><rect x="1679" y="686" width="2" height="6" fill="#b9b9c2"/><rect x="1743" y="686" width="2" height="6" fill="#b9b9c2"/><rect x="1807" y="686" width="2" height="6" fill="#b9b9c2"/><rect x="1871" y="684" width="2" height="8" fill="#fff"/></svg>
<div class="t" style="left:336px;top:668.61px;font-size:17px;line-height:17px;color:#fff;letter-spacing:0px;">0</div>
<div class="t" style="left:592px;top:668.61px;font-size:17px;line-height:17px;color:#fff;letter-spacing:0px;">1</div>
<div class="t" style="left:848px;top:668.61px;font-size:17px;line-height:17px;color:#fff;letter-spacing:0px;">2</div>
<div class="t" style="left:1104px;top:668.61px;font-size:17px;line-height:17px;color:#fff;letter-spacing:0px;">3</div>
<div class="t" style="left:1360px;top:668.61px;font-size:17px;line-height:17px;color:#fff;letter-spacing:0px;">4</div>
<div class="t" style="left:1616px;top:668.61px;font-size:17px;line-height:17px;color:#fff;letter-spacing:0px;">5</div>
<div class="t" style="left:1872px;top:668.61px;font-size:17px;line-height:17px;color:#fff;letter-spacing:0px;">6</div>
<svg style="left:0;top:0" width="1920" height="1080"><rect x="399" y="692" width="2" height="256" fill="#949b9c"/><rect x="399" y="956" width="2" height="35" fill="#949b9c"/><rect x="463" y="692" width="2" height="256" fill="#949b9c"/><rect x="463" y="956" width="2" height="35" fill="#949b9c"/><rect x="527" y="692" width="2" height="256" fill="#949b9c"/><rect x="527" y="956" width="2" height="35" fill="#949b9c"/><rect x="591" y="692" width="2" height="256" fill="#6b7171"/><rect x="591" y="956" width="2" height="35" fill="#6b7171"/><rect x="655" y="692" width="2" height="256" fill="#949b9c"/><rect x="655" y="956" width="2" height="35" fill="#949b9c"/><rect x="719" y="692" width="2" height="256" fill="#949b9c"/><rect x="719" y="956" width="2" height="35" fill="#949b9c"/><rect x="783" y="692" width="2" height="256" fill="#949b9c"/><rect x="783" y="956" width="2" height="35" fill="#949b9c"/><rect x="847" y="692" width="2" height="256" fill="#6b7171"/><rect x="847" y="956" width="2" height="35" fill="#6b7171"/><rect x="911" y="692" width="2" height="256" fill="#949b9c"/><rect x="911" y="956" width="2" height="35" fill="#949b9c"/><rect x="975" y="692" width="2" height="256" fill="#949b9c"/><rect x="975" y="956" width="2" height="35" fill="#949b9c"/><rect x="1039" y="692" width="2" height="256" fill="#949b9c"/><rect x="1039" y="956" width="2" height="35" fill="#949b9c"/><rect x="1103" y="692" width="2" height="256" fill="#6b7171"/><rect x="1103" y="956" width="2" height="35" fill="#6b7171"/><rect x="1167" y="692" width="2" height="256" fill="#949b9c"/><rect x="1167" y="956" width="2" height="35" fill="#949b9c"/><rect x="1231" y="692" width="2" height="256" fill="#949b9c"/><rect x="1231" y="956" width="2" height="35" fill="#949b9c"/><rect x="1295" y="692" width="2" height="256" fill="#949b9c"/><rect x="1295" y="956" width="2" height="35" fill="#949b9c"/><rect x="1359" y="692" width="2" height="256" fill="#6b7171"/><rect x="1359" y="956" width="2" height="35" fill="#6b7171"/><rect x="1423" y="692" width="2" height="256" fill="#949b9c"/><rect x="1423" y="956" width="2" height="35" fill="#949b9c"/><rect x="1487" y="692" width="2" height="256" fill="#949b9c"/><rect x="1487" y="956" width="2" height="35" fill="#949b9c"/><rect x="1551" y="692" width="2" height="256" fill="#949b9c"/><rect x="1551" y="956" width="2" height="35" fill="#949b9c"/><rect x="1615" y="692" width="2" height="256" fill="#6b7171"/><rect x="1615" y="956" width="2" height="35" fill="#6b7171"/><rect x="1679" y="692" width="2" height="256" fill="#949b9c"/><rect x="1679" y="956" width="2" height="35" fill="#949b9c"/><rect x="1743" y="692" width="2" height="256" fill="#949b9c"/><rect x="1743" y="956" width="2" height="35" fill="#949b9c"/><rect x="1807" y="692" width="2" height="256" fill="#949b9c"/><rect x="1807" y="956" width="2" height="35" fill="#949b9c"/><rect x="1871" y="692" width="2" height="256" fill="#6b7171"/><rect x="1871" y="956" width="2" height="35" fill="#6b7171"/></svg>
<svg style="left:0;top:0" width="1920" height="1080"><path d="M336.5 763.4V820.0M337.5 758.7V820.0M337.5 762.5V867.2M338.5 734.3V820.0M338.5 820.0V847.4M338.5 769.1V834.6M341.5 807.0V867.8M343.5 793.5V820.0M343.5 820.0V844.1M343.5 781.1V851.0M345.5 782.1V820.0M346.5 800.7V820.0M346.5 820.0V865.2M346.5 789.6V849.8M347.5 795.5V820.0M347.5 806.1V862.4M348.5 820.0V862.3M348.5 750.2V857.9M349.5 820.0V853.5M350.5 820.0V900.5M351.5 799.5V820.0M352.5 820.0V852.7M352.5 804.2V869.4M353.5 797.5V833.3M354.5 820.0V841.9M356.5 820.0V839.5M356.5 795.5V821.2M357.5 766.6V820.0M357.5 820.0V867.6M358.5 820.0V873.6M359.5 774.4V820.0M360.5 804.5V820.0M360.5 820.0V869.1M360.5 801.9V844.7M361.5 820.0V860.5M362.5 820.0V837.9M362.5 776.3V883.4M363.5 780.7V820.0M363.5 782.9V887.4M365.5 800.2V866.5M366.5 776.8V820.0M366.5 754.5V848.3M367.5 775.7V820.0M367.5 800.5V830.4M368.5 798.9V820.0M369.5 770.1V831.9M370.5 802.9V820.0M370.5 820.0V873.4M371.5 820.0V905.4M372.5 820.0V893.1M373.5 820.0V851.3M374.5 783.1V820.0M374.5 820.0V907.1M375.5 756.0V856.2M376.5 802.0V820.0M376.5 804.0V856.4M377.5 790.8V820.0M377.5 820.0V902.9M378.5 820.0V884.6M379.5 820.0V850.9M380.5 760.1V820.0M381.5 734.0V820.0M382.5 802.3V820.0M383.5 820.0V834.8M384.5 784.2V820.0M388.5 775.1V820.0M389.5 792.1V820.0M391.5 779.5V820.0M391.5 778.7V886.9M392.5 755.5V820.0M392.5 820.0V831.0M392.5 792.9V838.9M393.5 763.6V895.8M394.5 820.0V869.2M394.5 773.1V840.9M395.5 759.0V820.0M396.5 800.0V820.0M397.5 820.0V873.4M398.5 805.3V820.0M398.5 820.0V899.3M399.5 768.2V820.0M399.5 820.0V873.3M399.5 810.3V846.6M400.5 772.8V820.0M400.5 820.0V831.3M400.5 767.5V851.5M401.5 820.0V856.8M402.5 798.6V820.0M402.5 820.0V827.3M402.5 798.6V838.6M403.5 781.2V820.0M403.5 820.0V854.2M404.5 757.9V820.0M406.5 768.2V820.0M406.5 820.0V851.3M406.5 794.8V879.4M407.5 774.7V879.4M408.5 817.7V820.0M408.5 820.0V850.3M408.5 775.7V857.4M409.5 809.9V820.0M409.5 820.0V883.7M410.5 787.6V820.0M410.5 767.5V850.4M411.5 820.0V876.6M411.5 799.1V876.6M412.5 820.0V869.1M413.5 797.1V820.0M413.5 820.0V893.0M414.5 813.9V820.0M414.5 820.0V908.0M414.5 778.6V846.3M417.5 756.6V820.0M417.5 820.0V885.1M417.5 780.6V848.7M418.5 820.0V908.0M419.5 792.1V820.0M419.5 770.8V852.3M420.5 820.0V853.6M420.5 786.6V882.2M421.5 781.1V820.0M421.5 794.7V875.4M422.5 770.8V820.0M422.5 754.7V877.6M423.5 791.2V872.9M424.5 820.0V876.3M425.5 764.1V820.0M425.5 820.0V836.6M427.5 792.1V820.0M427.5 820.0V851.6M427.5 797.2V879.8M428.5 780.5V820.0M428.5 820.0V856.7M429.5 820.0V896.0M430.5 772.2V820.0M430.5 820.0V888.6M431.5 820.0V853.3M432.5 820.0V869.0M432.5 804.2V848.0M433.5 820.0V846.1M434.5 820.0V857.9M435.5 805.9V820.0M436.5 804.7V820.0M437.5 810.5V820.0M437.5 820.0V845.7M437.5 775.1V838.0M438.5 793.3V874.1M439.5 820.0V861.6M440.5 820.0V875.7M440.5 782.1V879.4M442.5 786.4V820.0M443.5 794.1V820.0M444.5 820.0V850.9M444.5 803.0V848.8M445.5 751.3V820.0M445.5 802.8V858.2M446.5 734.0V820.0M448.5 805.5V820.0M448.5 820.0V870.1M449.5 820.0V847.8M450.5 782.0V859.6M451.5 767.2V820.0M451.5 820.0V858.1M452.5 820.0V834.6M454.5 751.2V820.0M454.5 820.0V835.4M454.5 800.2V891.9M455.5 783.8V820.0M455.5 820.0V821.5M456.5 776.5V820.0M456.5 812.0V874.0M458.5 765.3V820.0M459.5 790.5V820.0M460.5 795.1V820.0M460.5 772.1V896.0M461.5 787.2V820.0M463.5 820.0V875.3M463.5 800.5V848.6M464.5 775.3V820.0M464.5 820.0V839.2M465.5 757.6V820.0M465.5 763.0V858.0M467.5 820.0V864.2M467.5 787.0V854.4M468.5 768.3V820.0M468.5 792.2V845.3M469.5 769.0V820.0M470.5 820.0V860.9M470.5 760.5V848.5M471.5 820.0V859.7M472.5 820.0V835.7M472.5 761.9V824.8M473.5 802.0V820.0M473.5 820.0V858.6M473.5 795.3V853.7M474.5 820.0V887.9M474.5 803.6V836.6M475.5 783.0V820.0M475.5 820.0V883.6M475.5 787.9V879.6M476.5 805.8V820.0M476.5 807.7V867.8M477.5 776.3V820.0M477.5 776.5V851.0M478.5 820.0V876.5M479.5 804.3V820.0M479.5 814.8V854.0M480.5 781.2V820.0M481.5 820.0V851.8M482.5 799.6V820.0M482.5 820.0V871.3M483.5 820.0V880.1M483.5 768.4V852.3M484.5 820.0V871.8M485.5 797.1V820.0M485.5 775.8V833.9M486.5 820.0V887.1M487.5 781.4V859.4M488.5 786.2V879.3M489.5 820.0V854.1M489.5 764.4V833.0M492.5 807.1V820.0M493.5 762.8V820.0M493.5 802.7V841.6M494.5 777.1V820.0M494.5 790.7V858.6M495.5 793.7V820.0M495.5 801.0V864.9M496.5 763.4V820.0M496.5 771.9V854.1M498.5 794.4V820.0M500.5 786.5V862.1M501.5 820.0V853.1M501.5 803.3V868.7M504.5 783.5V820.0M504.5 820.0V833.9M504.5 794.0V865.0M505.5 786.1V841.3M506.5 799.4V848.8M507.5 793.2V820.0M507.5 820.0V840.1M508.5 779.5V825.9M509.5 820.0V837.8M510.5 795.4V820.0M510.5 820.0V861.8M510.5 767.9V858.0M512.5 820.0V834.5M512.5 772.8V874.7M514.5 771.8V820.0M514.5 820.0V828.7M515.5 794.0V820.0M516.5 820.0V846.5M517.5 796.4V820.0M517.5 801.8V847.7M518.5 820.0V835.3M518.5 771.5V846.9M520.5 804.3V820.0M520.5 808.6V877.1M521.5 768.4V820.0M521.5 820.0V859.3M523.5 820.0V870.8M523.5 750.8V866.4M524.5 820.0V839.7M525.5 789.4V879.2M526.5 767.9V820.0M527.5 820.0V853.4M527.5 791.6V827.1M528.5 787.9V820.0M528.5 779.6V832.7M529.5 738.2V844.7M530.5 772.6V820.0M530.5 770.0V848.4M531.5 754.5V820.0M532.5 815.3V860.1M533.5 820.0V900.5M534.5 763.6V820.0M534.5 820.0V870.6M535.5 820.0V865.7M535.5 788.3V843.3M536.5 820.0V880.4M536.5 795.8V884.0M537.5 820.0V877.5M538.5 780.3V824.3M539.5 785.7V820.0M541.5 792.2V826.5M542.5 793.6V820.0M542.5 820.0V852.0M543.5 793.2V820.0M543.5 820.0V838.5M544.5 790.5V820.0M544.5 820.0V849.3M545.5 773.2V820.0M545.5 820.0V847.8M545.5 751.9V849.4M546.5 820.0V899.6M546.5 780.4V829.0M547.5 771.1V820.0M547.5 820.0V881.7M548.5 820.0V866.8M549.5 800.1V820.0M550.5 808.9V820.0M550.5 820.0V880.3M551.5 778.1V867.1M552.5 767.9V820.0M552.5 820.0V870.4M552.5 789.8V827.7M553.5 808.6V820.0M553.5 795.2V853.5M555.5 760.3V820.0M555.5 770.8V827.8M556.5 820.0V865.8M556.5 794.9V859.7M557.5 778.6V820.0M558.5 790.7V820.0M559.5 754.2V861.0M561.5 772.0V820.0M561.5 820.0V884.8M562.5 820.0V855.3M563.5 799.4V820.0M563.5 779.9V838.5M564.5 734.6V820.0M567.5 774.4V820.0M568.5 820.0V866.6M569.5 777.2V820.0M572.5 795.1V820.0M573.5 757.1V820.0M573.5 774.1V878.9M574.5 766.6V844.0M576.5 766.6V820.0M576.5 820.0V889.8M577.5 778.6V835.1M578.5 820.0V857.7M579.5 818.0V867.9M580.5 805.7V820.0M580.5 820.0V826.5M580.5 783.5V851.7M581.5 820.0V852.3M582.5 816.4V820.0M583.5 802.2V820.0M583.5 820.0V848.7M583.5 784.9V877.1M584.5 820.0V856.3M585.5 748.0V820.0M585.5 820.0V846.1M585.5 809.5V863.4M586.5 794.8V820.0M587.5 820.0V839.6M587.5 770.8V868.4M588.5 820.0V846.3M589.5 772.4V820.0M590.5 776.6V820.0M590.5 820.0V849.9M591.5 808.0V820.0M592.5 788.5V820.0M592.5 820.0V864.4M592.5 763.1V860.9M593.5 820.0V848.3M593.5 807.0V878.4M594.5 820.0V863.5M594.5 777.9V861.9M595.5 820.0V847.8M595.5 784.6V884.1M598.5 803.7V820.0M598.5 820.0V883.5M599.5 800.8V820.0M599.5 820.0V869.4M599.5 818.9V840.2M600.5 801.9V863.2M601.5 765.0V820.0M601.5 820.0V895.1M602.5 760.6V820.0M602.5 775.4V849.0M603.5 768.3V820.0M603.5 820.0V848.6M604.5 820.0V908.0M605.5 820.0V870.4M605.5 797.4V844.2M606.5 757.3V820.0M606.5 820.0V846.6M607.5 820.0V862.8M607.5 781.0V822.5M608.5 820.0V829.3M609.5 792.9V820.0M609.5 820.0V873.3M611.5 820.0V892.0M613.5 754.5V820.0M613.5 779.8V904.1M614.5 820.0V869.0M614.5 772.0V857.9M615.5 777.4V820.0M615.5 814.0V872.2M616.5 820.0V886.9M616.5 790.2V850.8M617.5 776.1V820.0M617.5 820.0V885.2M618.5 820.0V863.8M618.5 766.9V883.3M619.5 766.1V820.0M620.5 820.0V869.6M620.5 776.6V822.8M621.5 789.7V820.0M621.5 820.0V856.6M622.5 771.7V820.0M622.5 779.1V883.8M624.5 772.0V839.0M625.5 787.2V877.6M626.5 788.0V820.0M628.5 810.9V856.8M629.5 792.4V820.0M629.5 780.3V831.4M630.5 820.0V861.3M630.5 769.6V880.0M631.5 820.0V846.0M631.5 758.8V860.1M634.5 739.8V820.0M634.5 779.8V825.2M636.5 788.7V820.0M637.5 820.0V865.5M638.5 784.2V820.0M638.5 790.7V890.2M639.5 757.3V820.0M639.5 820.0V869.2M640.5 820.0V870.4M640.5 773.8V831.6M641.5 740.8V820.0M642.5 820.0V865.0M643.5 820.0V882.8M644.5 735.8V820.0M644.5 804.0V839.5M645.5 797.7V820.0M645.5 820.0V891.4M646.5 780.5V820.0M646.5 820.0V888.2M646.5 749.0V870.4M647.5 743.1V820.0M647.5 767.6V838.8M648.5 763.0V820.0M648.5 781.9V848.9M649.5 769.9V820.0M649.5 820.0V849.5M650.5 804.7V820.0M650.5 782.1V883.3M651.5 820.0V869.8M652.5 820.0V850.5M652.5 795.9V882.4M653.5 745.2V848.5M654.5 778.1V820.0M654.5 771.0V855.2M655.5 773.4V820.0M657.5 780.5V820.0M658.5 792.6V820.0M658.5 788.2V850.6M659.5 784.4V857.0M660.5 771.0V820.0M660.5 755.7V877.4M661.5 820.0V880.4M662.5 820.0V856.2M663.5 820.0V838.9M663.5 791.0V848.1M664.5 820.0V892.9M665.5 766.5V820.0M665.5 820.0V864.5M666.5 770.2V820.0M667.5 780.4V820.0M667.5 820.0V842.6M668.5 820.0V866.9M668.5 782.5V865.2M669.5 766.2V820.0M670.5 786.3V820.0M670.5 783.3V863.2M671.5 820.0V853.5M672.5 794.7V820.0M672.5 820.0V845.6M672.5 765.7V833.0M673.5 789.2V820.0M673.5 820.0V856.4M673.5 790.2V850.5M674.5 754.3V820.0M674.5 820.0V861.2M675.5 789.5V820.0M675.5 760.8V860.5M676.5 788.1V820.0M677.5 786.7V820.0M678.5 766.7V835.4M679.5 801.1V820.0M679.5 780.7V875.9M680.5 801.0V860.8M681.5 820.0V854.3M682.5 761.7V820.0M682.5 820.0V877.0M683.5 820.0V866.5M685.5 777.7V820.0M685.5 820.0V895.9M686.5 769.6V820.0M686.5 820.0V865.8M687.5 810.3V820.0M687.5 820.0V908.0M687.5 781.4V864.3M689.5 771.9V820.0M689.5 820.0V851.0M691.5 820.0V836.9M691.5 767.2V857.4M692.5 790.9V820.0M693.5 798.9V820.0M693.5 789.7V832.7M694.5 795.5V820.0M695.5 820.0V846.3M695.5 806.7V851.8M696.5 811.5V820.0M696.5 820.0V861.0M696.5 800.5V852.8M697.5 780.8V820.0M697.5 820.0V898.0M697.5 802.7V863.1M699.5 783.0V820.0M700.5 820.0V842.5M700.5 805.9V835.9M701.5 784.1V820.0M701.5 820.0V867.5M703.5 762.3V820.0M703.5 820.0V851.8M703.5 791.7V847.2M705.5 795.0V844.4M706.5 820.0V860.8M707.5 800.4V820.0M707.5 820.0V862.8M707.5 805.5V855.0M709.5 764.1V820.0M710.5 759.2V820.0M710.5 820.0V865.4M711.5 820.0V859.2M711.5 791.6V850.5M712.5 793.6V820.0M712.5 820.0V867.5M712.5 780.0V864.7M713.5 782.4V823.5M714.5 799.4V820.0M715.5 811.4V865.4M716.5 820.0V902.1M716.5 778.6V839.1M717.5 765.3V820.0M717.5 776.7V840.1M719.5 820.0V834.8M719.5 768.0V866.8M720.5 779.5V820.0M720.5 820.0V880.5M721.5 778.2V820.0M721.5 820.0V836.2M722.5 805.9V820.0M722.5 820.0V878.7M722.5 780.0V863.9M723.5 820.0V863.7M725.5 771.5V863.2M727.5 766.5V820.0M728.5 799.1V820.0M728.5 809.5V847.4M729.5 754.3V820.0M729.5 783.3V853.0M730.5 820.0V874.6M731.5 796.2V820.0M732.5 820.0V854.0M732.5 786.9V867.5M733.5 771.6V820.0M733.5 794.9V841.4M735.5 796.1V820.0M735.5 820.0V868.8M736.5 794.4V851.4M737.5 794.5V820.0M738.5 772.5V820.0M738.5 798.7V841.1M739.5 789.2V820.0M741.5 800.5V861.9M742.5 786.7V833.4M743.5 794.5V820.0M744.5 793.4V820.0M744.5 820.0V842.0M745.5 787.6V820.0M745.5 820.0V859.8M745.5 784.2V835.1M746.5 793.0V820.0M746.5 820.0V867.4M746.5 805.6V837.4M747.5 820.0V863.4M747.5 806.7V855.6M748.5 820.0V823.3M748.5 805.4V871.8M749.5 803.9V844.5M750.5 820.0V842.1M751.5 820.0V895.1M752.5 820.0V848.6M753.5 791.5V820.0M753.5 820.0V855.5M754.5 820.0V839.3M755.5 781.1V849.2M756.5 766.8V863.6M757.5 804.5V820.0M758.5 795.0V820.0M758.5 820.0V863.8M758.5 781.0V841.5M759.5 804.6V820.0M759.5 820.0V888.7M760.5 782.7V820.0M760.5 762.8V855.2M761.5 759.7V820.0M761.5 799.6V863.6M762.5 820.0V847.6M762.5 812.0V844.6M763.5 774.8V820.0M763.5 794.7V858.2M764.5 776.4V838.2M765.5 783.0V820.0M765.5 799.9V867.8M766.5 816.6V820.0M766.5 820.0V872.4M767.5 771.0V820.0M767.5 820.0V844.1M768.5 815.2V820.0M768.5 820.0V875.8M768.5 781.7V834.5M769.5 789.9V820.0M770.5 784.5V820.0M770.5 820.0V826.8M771.5 820.0V877.6M772.5 800.6V820.0M772.5 820.0V846.9M772.5 788.0V839.0M775.5 797.7V868.9M776.5 811.3V820.0M776.5 820.0V856.7M776.5 765.6V868.6M777.5 767.0V820.0M777.5 820.0V841.5M777.5 775.5V837.0M779.5 778.2V820.0M779.5 820.0V876.6M779.5 804.3V874.0M780.5 820.0V853.1M781.5 820.0V871.1M781.5 777.6V857.3M782.5 798.4V820.0M782.5 820.0V865.5M782.5 782.7V825.0M783.5 803.4V820.0M783.5 820.0V865.2M784.5 771.7V820.0M784.5 775.4V851.2M785.5 770.9V820.0M785.5 820.0V860.3M786.5 803.6V820.0M786.5 820.0V828.3M787.5 756.7V820.0M787.5 820.0V829.7M788.5 771.9V820.0M788.5 794.6V858.3M789.5 779.7V862.0M790.5 820.0V899.3M790.5 781.9V830.6M791.5 820.0V833.3M791.5 791.7V855.5M792.5 790.5V820.0M792.5 820.0V878.7M792.5 773.9V870.1M793.5 806.8V820.0M793.5 820.0V858.4M794.5 776.7V820.0M794.5 794.3V857.2M795.5 779.6V820.0M795.5 820.0V857.9M796.5 820.0V894.9M796.5 754.9V876.8M797.5 810.5V820.0M798.5 797.9V820.0M799.5 764.6V820.0M800.5 820.0V837.4M800.5 805.5V865.8M801.5 754.4V820.0M801.5 820.0V851.4M801.5 803.4V842.9M802.5 771.8V839.7M803.5 775.3V820.0M803.5 820.0V845.3M803.5 767.7V841.8M804.5 798.8V820.0M804.5 820.0V862.9M805.5 745.1V820.0M805.5 820.0V853.7M805.5 765.7V879.4M806.5 797.5V865.8M808.5 812.2V820.0M810.5 762.9V857.7M811.5 785.0V820.0M811.5 820.0V830.4M811.5 791.3V824.1M812.5 820.0V860.1M812.5 781.5V862.8M814.5 820.0V883.5M815.5 820.0V865.3M816.5 757.2V820.0M816.5 820.0V863.7M817.5 798.0V820.0M817.5 820.0V842.1M819.5 820.0V844.4M820.5 774.1V872.4M821.5 820.0V840.1M822.5 820.0V840.6M823.5 820.0V849.3M823.5 811.8V836.9M824.5 820.0V851.8M824.5 763.0V875.6M825.5 781.4V820.0M826.5 760.0V820.0M828.5 802.9V820.0M828.5 820.0V872.6M829.5 760.6V820.0M829.5 782.5V845.9M830.5 781.0V870.0M831.5 755.6V820.0M831.5 820.0V858.2M831.5 779.0V862.5M832.5 789.9V820.0M832.5 806.3V850.7M833.5 820.0V864.4M833.5 776.0V872.0M834.5 820.0V861.3M834.5 803.6V879.1M835.5 802.6V885.7M836.5 760.7V820.0M836.5 820.0V839.0M836.5 802.2V834.2M837.5 820.0V883.1M838.5 820.0V881.4M839.5 779.0V820.0M839.5 787.7V850.8M840.5 820.0V852.9M840.5 746.2V846.5M842.5 759.8V820.0M842.5 820.0V845.0M842.5 765.1V849.3M843.5 797.8V820.0M843.5 791.9V857.7M844.5 779.2V820.0M846.5 820.0V899.2M846.5 772.7V861.3M847.5 740.6V820.0M850.5 776.1V820.0M850.5 820.0V873.8M850.5 781.4V861.2M851.5 820.0V832.1M851.5 794.7V840.2M852.5 820.0V830.1M853.5 820.0V908.0M853.5 771.6V857.9M855.5 762.6V820.0M856.5 802.0V820.0M856.5 786.5V826.5M857.5 771.9V820.0M857.5 820.0V849.7M858.5 790.2V820.0M858.5 820.0V846.8M859.5 782.6V820.0M861.5 756.7V820.0M862.5 767.6V820.0M863.5 801.8V820.0M863.5 820.0V839.7M863.5 760.9V835.4M864.5 820.0V851.6M865.5 787.7V820.0M865.5 789.6V871.9M866.5 772.2V820.0M867.5 745.2V820.0M867.5 820.0V841.0M868.5 787.6V820.0M868.5 820.0V864.6M869.5 782.7V820.0M869.5 771.7V848.0M870.5 797.4V820.0M870.5 820.0V900.1M870.5 762.2V853.9M871.5 762.1V820.0M871.5 799.8V874.5M872.5 735.3V820.0M872.5 795.9V844.3M873.5 769.3V820.0M874.5 820.0V831.1M874.5 815.2V848.8M875.5 794.9V820.0M875.5 820.0V879.0M876.5 790.1V820.0M876.5 820.0V885.1M877.5 776.5V820.0M877.5 820.0V839.5M878.5 820.0V844.2M878.5 816.2V854.7M879.5 806.7V820.0M879.5 820.0V877.5M880.5 820.0V892.7M881.5 786.6V865.2M882.5 820.0V882.6M883.5 820.0V880.1M883.5 785.8V858.5M885.5 791.3V820.0M887.5 777.5V820.0M888.5 803.7V835.9M889.5 798.4V820.0M889.5 781.5V828.5M890.5 820.0V837.0M890.5 801.7V847.2M891.5 799.7V820.0M891.5 820.0V846.7M892.5 820.0V859.8M892.5 806.7V840.8M893.5 820.0V872.7M894.5 820.0V822.4M896.5 797.5V828.8M897.5 785.9V820.0M897.5 820.0V868.8M898.5 779.8V820.0M899.5 799.8V820.0M899.5 820.0V892.6M899.5 772.8V883.3M901.5 762.2V820.0M902.5 768.2V846.1M903.5 820.0V847.4M904.5 820.0V868.1M905.5 813.9V820.0M905.5 820.0V860.7M907.5 753.2V820.0M907.5 820.0V871.9M907.5 819.2V836.1M908.5 820.0V832.7M909.5 753.5V820.0M909.5 820.0V902.0M909.5 807.9V878.7M911.5 776.4V820.0M911.5 820.0V847.6M911.5 766.2V842.1M912.5 755.8V820.0M913.5 802.1V820.0M913.5 820.0V872.7M913.5 759.5V856.2M914.5 796.3V856.3M915.5 797.5V820.0M915.5 820.0V833.0M917.5 791.2V820.0M918.5 802.3V820.0M918.5 820.0V892.1M919.5 787.9V860.4M920.5 788.2V854.1M921.5 820.0V875.0M921.5 768.8V840.2M922.5 789.4V889.1M923.5 763.8V820.0M923.5 820.0V867.0M925.5 795.5V820.0M926.5 796.5V820.0M927.5 781.2V820.0M927.5 820.0V848.9M927.5 805.7V827.3M928.5 783.1V820.0M929.5 800.2V841.1M930.5 820.0V838.7M930.5 793.2V861.9M932.5 820.0V851.6M934.5 790.4V820.0M934.5 820.0V835.1M934.5 789.5V850.2M935.5 767.8V858.0M936.5 777.9V820.0M937.5 793.5V820.0M938.5 769.8V820.0M938.5 820.0V862.0M939.5 785.4V820.0M939.5 820.0V867.5M939.5 795.7V862.4M940.5 820.0V828.7M940.5 794.1V861.1M941.5 792.2V820.0M941.5 820.0V831.1M942.5 820.0V835.8M943.5 820.0V844.7M944.5 769.0V820.0M944.5 820.0V869.0M945.5 794.0V820.0M945.5 769.3V862.8M946.5 770.0V820.0M946.5 820.0V873.7M946.5 791.8V844.9M947.5 820.0V854.2M948.5 774.7V820.0M948.5 820.0V835.3M948.5 773.6V869.3M950.5 790.8V820.0M950.5 820.0V870.9M951.5 783.5V848.8M952.5 761.1V820.0M952.5 820.0V892.3M952.5 785.2V854.2M953.5 758.1V820.0M953.5 776.0V854.6M954.5 808.7V820.0M954.5 797.1V827.7M955.5 820.0V867.1M955.5 802.3V864.7M957.5 794.0V820.0M958.5 813.0V820.0M959.5 795.5V820.0M959.5 812.2V851.7M961.5 783.7V826.4M962.5 820.0V860.5M962.5 790.5V838.7M963.5 820.0V876.4M964.5 820.0V845.2M966.5 808.1V820.0M967.5 759.5V820.0M969.5 787.6V820.0M969.5 782.2V846.8M970.5 820.0V850.3M970.5 819.6V842.0M971.5 784.6V820.0M972.5 796.5V820.0M972.5 791.5V867.0M974.5 792.2V820.0M975.5 773.1V820.0M975.5 801.4V859.8M976.5 767.0V820.0M976.5 820.0V863.8M977.5 793.1V820.0M977.5 782.0V849.1M979.5 777.4V820.0M979.5 803.0V855.6M980.5 820.0V879.0M982.5 771.3V820.0M982.5 792.5V848.0M983.5 765.3V820.0M983.5 820.0V878.1M984.5 754.6V820.0M984.5 820.0V886.7M985.5 794.7V820.0M985.5 820.0V857.6M986.5 820.0V851.0M987.5 820.0V879.4M989.5 802.0V874.7M990.5 734.7V820.0M990.5 820.0V836.3M991.5 787.6V861.8M992.5 756.9V820.0M992.5 820.0V885.6M992.5 788.5V882.6M993.5 762.0V820.0M993.5 820.0V893.0M993.5 801.2V888.5M994.5 804.9V820.0M995.5 773.0V820.0M995.5 820.0V838.3M996.5 799.2V820.0M999.5 780.4V820.0M999.5 820.0V862.8M1000.5 820.0V851.3M1001.5 820.0V853.7M1002.5 794.6V820.0M1003.5 820.0V844.8M1003.5 803.8V833.1M1004.5 820.0V890.5M1004.5 770.3V852.9M1005.5 820.0V834.2M1005.5 784.5V832.7M1006.5 793.4V820.0M1007.5 820.0V837.6M1008.5 785.1V839.4M1009.5 799.1V820.0M1009.5 820.0V860.8M1010.5 820.0V869.7M1010.5 789.4V868.6M1012.5 781.3V841.6M1013.5 797.8V820.0M1013.5 820.0V851.8M1013.5 782.1V826.8M1014.5 820.0V845.4M1015.5 810.1V820.0M1016.5 784.7V820.0M1016.5 820.0V847.9M1017.5 787.2V820.0M1017.5 820.0V871.6M1018.5 820.0V874.8M1018.5 777.4V850.8M1019.5 786.8V820.0M1019.5 763.9V854.3M1020.5 792.4V820.0M1021.5 820.0V866.6M1021.5 794.1V866.9M1022.5 820.0V862.7M1023.5 800.0V871.7M1025.5 820.0V872.0M1025.5 777.2V866.5M1026.5 771.3V820.0M1026.5 820.0V866.1M1027.5 820.0V893.5M1027.5 776.5V853.3M1030.5 820.0V905.0M1030.5 778.6V837.9M1031.5 820.0V842.3M1031.5 781.9V838.4M1032.5 768.7V836.3M1033.5 780.7V820.0M1033.5 778.6V852.0M1034.5 790.1V820.0M1034.5 780.3V863.9M1035.5 820.0V840.2M1035.5 774.4V847.4M1036.5 767.4V820.0M1037.5 820.0V875.0M1039.5 760.9V820.0M1039.5 810.5V860.8M1041.5 767.1V820.0M1042.5 786.3V820.0M1042.5 820.0V851.6M1042.5 794.1V845.7M1043.5 820.0V847.5M1044.5 796.5V820.0M1044.5 800.3V855.0M1045.5 774.3V820.0M1045.5 767.1V867.0M1046.5 773.3V820.0M1046.5 820.0V859.7M1048.5 773.7V820.0M1049.5 805.4V820.0M1049.5 820.0V892.4M1049.5 775.1V847.6M1050.5 805.3V836.5M1051.5 820.0V853.3M1051.5 806.0V859.4M1052.5 752.6V820.0M1053.5 800.8V820.0M1053.5 820.0V876.6M1053.5 773.8V852.0M1055.5 798.0V820.0M1055.5 820.0V881.0M1055.5 808.0V832.3M1056.5 797.8V820.0M1056.5 792.5V840.4M1057.5 789.2V820.0M1057.5 820.0V858.4M1057.5 785.0V834.6M1058.5 820.0V833.8M1059.5 776.8V820.0M1059.5 820.0V848.2M1060.5 820.0V858.4M1060.5 777.8V873.7M1061.5 760.4V820.0M1062.5 773.5V820.0M1063.5 769.0V884.5M1064.5 807.6V820.0M1065.5 770.3V835.2M1066.5 820.0V870.0M1066.5 812.1V880.6M1067.5 764.8V820.0M1067.5 820.0V881.1M1067.5 805.5V868.3M1069.5 768.7V820.0M1069.5 820.0V843.6M1069.5 789.3V822.9M1070.5 793.1V820.0M1071.5 805.6V820.0M1071.5 820.0V892.2M1072.5 820.0V862.6M1072.5 784.0V861.0M1074.5 784.2V820.0M1074.5 806.1V838.2M1076.5 820.0V840.7M1076.5 799.4V855.4M1077.5 820.0V856.7M1078.5 798.7V820.0M1079.5 789.4V820.0M1080.5 801.5V820.0M1080.5 820.0V867.4M1081.5 820.0V860.0M1081.5 789.7V834.4M1082.5 743.7V820.0M1083.5 768.8V820.0M1083.5 820.0V878.9M1084.5 805.9V820.0M1084.5 820.0V890.3M1085.5 776.7V820.0M1085.5 820.0V844.5M1086.5 782.2V820.0M1086.5 748.7V878.4M1087.5 785.0V858.9M1088.5 786.7V829.4M1089.5 753.7V820.0M1089.5 820.0V892.2M1090.5 771.6V820.0M1090.5 820.0V855.9M1090.5 804.9V842.6M1091.5 798.2V820.0M1091.5 820.0V863.0M1092.5 771.8V880.4M1093.5 803.1V820.0M1094.5 786.6V820.0M1095.5 734.0V820.0M1095.5 820.0V852.0M1096.5 820.0V872.5M1096.5 795.1V896.5M1097.5 820.0V897.2M1098.5 820.0V860.2M1098.5 790.2V843.6M1099.5 820.0V907.1M1099.5 812.0V853.5M1100.5 794.8V820.0M1100.5 820.0V859.5M1100.5 794.1V863.2M1101.5 787.4V820.0M1102.5 744.3V820.0M1102.5 787.3V855.8M1103.5 820.0V845.0M1104.5 751.3V820.0M1104.5 820.0V848.4M1104.5 753.3V863.7M1105.5 820.0V871.8M1105.5 794.2V859.4M1106.5 820.0V869.5M1106.5 767.9V860.1M1107.5 820.0V855.9M1109.5 754.3V820.0M1110.5 762.6V842.0M1112.5 783.6V820.0M1113.5 820.0V853.1M1113.5 809.2V848.7M1114.5 804.8V820.0M1114.5 820.0V864.9M1115.5 791.8V882.5M1117.5 820.0V850.2M1117.5 798.7V861.8M1118.5 802.4V860.4M1119.5 820.0V843.3M1120.5 820.0V869.6M1120.5 786.7V873.0M1121.5 820.0V826.6M1122.5 806.1V820.0M1122.5 797.4V868.3M1123.5 791.7V820.0M1123.5 820.0V849.6M1125.5 791.7V858.5M1126.5 738.7V820.0M1127.5 776.8V820.0M1128.5 789.7V820.0M1128.5 820.0V842.4M1128.5 781.9V874.0M1129.5 806.6V820.0M1130.5 803.1V820.0M1130.5 820.0V872.4M1130.5 810.4V843.6M1131.5 756.4V820.0M1132.5 772.6V820.0M1133.5 820.0V883.9M1134.5 785.7V856.2M1135.5 812.1V820.0M1135.5 820.0V859.8M1135.5 787.5V848.4M1136.5 820.0V842.5M1137.5 794.7V820.0M1138.5 792.8V820.0M1138.5 796.8V842.0M1139.5 784.6V820.0M1140.5 765.6V820.0M1140.5 820.0V835.2M1141.5 795.7V835.4M1142.5 782.7V820.0M1142.5 798.0V860.9M1143.5 820.0V905.9M1144.5 772.8V820.0M1144.5 777.9V861.3M1146.5 752.3V820.0M1146.5 820.0V864.0M1146.5 780.0V875.3M1147.5 790.3V820.0M1147.5 820.0V875.2M1147.5 774.5V842.1M1148.5 820.0V858.3M1149.5 820.0V834.4M1150.5 742.6V820.0M1150.5 820.0V876.0M1150.5 799.2V855.6M1151.5 763.5V820.0M1151.5 773.6V824.5M1152.5 810.2V820.0M1152.5 820.0V838.5M1152.5 809.5V834.2M1154.5 755.2V846.3M1155.5 795.6V835.5M1156.5 820.0V884.6M1157.5 791.1V820.0M1157.5 815.5V848.5M1158.5 785.6V820.0M1158.5 820.0V879.5M1159.5 820.0V837.0M1159.5 791.9V863.6M1160.5 779.6V820.0M1162.5 772.3V820.0M1162.5 820.0V834.9M1162.5 783.3V830.1M1164.5 820.0V846.7M1165.5 802.2V820.0M1165.5 820.0V852.3M1166.5 767.8V820.0M1166.5 820.0V824.9M1168.5 795.3V820.0M1168.5 820.0V839.7M1169.5 820.0V856.4M1169.5 797.4V864.8M1170.5 790.6V820.0M1170.5 820.0V885.1M1170.5 793.1V820.9M1171.5 775.7V820.0M1172.5 811.4V820.0M1172.5 795.7V873.6M1173.5 803.8V820.0M1173.5 820.0V902.1M1174.5 820.0V842.3M1176.5 802.7V820.0M1176.5 768.5V847.4M1177.5 769.6V820.0M1177.5 781.6V877.1M1178.5 763.8V820.0M1178.5 791.0V828.0M1179.5 782.6V820.0M1179.5 767.9V840.0M1180.5 820.0V868.1M1180.5 781.7V845.6M1182.5 809.5V876.5M1183.5 765.2V820.0M1183.5 820.0V865.4M1184.5 820.0V871.1M1185.5 750.8V820.0M1185.5 820.0V849.0M1185.5 768.9V855.0M1186.5 793.3V820.0M1186.5 808.9V896.3M1187.5 788.2V820.0M1187.5 785.1V872.0M1188.5 801.7V820.0M1188.5 820.0V836.2M1188.5 759.9V879.6M1189.5 796.5V820.0M1189.5 820.0V851.4M1189.5 770.0V860.1M1190.5 790.3V820.0M1190.5 795.0V876.2M1191.5 775.3V820.0M1191.5 793.3V865.3M1192.5 811.8V820.0M1192.5 820.0V872.6M1192.5 778.0V832.0M1193.5 820.0V840.2M1193.5 761.3V847.7M1194.5 820.0V848.0M1194.5 798.9V837.6M1195.5 811.1V820.0M1195.5 820.0V848.7M1196.5 790.6V820.0M1196.5 820.0V826.0M1198.5 805.4V820.0M1198.5 820.0V857.2M1199.5 776.7V820.0M1199.5 820.0V865.0M1200.5 777.8V820.0M1200.5 820.0V825.5M1200.5 769.2V831.9M1201.5 820.0V850.6M1202.5 779.2V820.0M1202.5 820.0V826.9M1203.5 820.0V847.8M1203.5 778.9V850.6M1204.5 820.0V843.4M1205.5 820.0V871.6M1205.5 766.7V855.0M1206.5 792.1V820.0M1206.5 777.7V844.6M1207.5 800.1V820.0M1208.5 780.5V820.0M1209.5 820.0V847.2M1209.5 811.7V830.2M1211.5 765.0V864.0M1212.5 757.0V820.0M1213.5 820.0V873.6M1213.5 793.3V827.8M1214.5 816.0V874.8M1215.5 809.1V820.0M1215.5 820.0V898.5M1215.5 771.6V856.1M1216.5 820.0V885.8M1216.5 765.1V867.0M1217.5 764.4V820.0M1217.5 820.0V848.9M1218.5 820.0V841.5M1219.5 801.1V820.0M1219.5 820.0V839.9M1220.5 770.5V820.0M1220.5 820.0V892.7M1221.5 795.5V820.0M1221.5 786.9V851.0M1222.5 795.3V820.0M1222.5 820.0V847.2M1223.5 795.4V820.0M1223.5 820.0V837.0M1223.5 795.0V835.3M1224.5 768.0V820.0M1225.5 820.0V863.6M1225.5 768.0V860.1M1227.5 781.1V820.0M1227.5 820.0V858.0M1228.5 798.2V820.0M1228.5 820.0V870.3M1228.5 792.0V851.2M1231.5 814.1V820.0M1231.5 820.0V857.2M1232.5 793.9V820.0M1233.5 820.0V853.8M1234.5 809.7V820.0M1234.5 774.0V871.3M1235.5 781.2V820.0M1235.5 820.0V856.8M1235.5 766.0V864.3M1236.5 775.7V820.0M1236.5 820.0V876.9M1237.5 820.0V843.4M1238.5 808.4V850.8M1239.5 820.0V875.2M1239.5 798.2V869.9M1240.5 788.8V820.0M1240.5 799.3V836.9M1241.5 789.4V820.0M1241.5 797.3V874.3M1242.5 803.3V820.0M1242.5 820.0V857.6M1243.5 816.7V820.0M1243.5 820.0V865.9M1243.5 789.7V856.5M1244.5 786.0V820.0M1244.5 820.0V841.7M1246.5 820.0V870.8M1246.5 784.1V871.8M1247.5 787.8V820.0M1247.5 820.0V854.0M1248.5 797.6V820.0M1248.5 799.1V837.3M1249.5 797.2V820.0M1250.5 794.6V820.0M1250.5 820.0V833.5M1252.5 785.0V820.0M1254.5 775.3V820.0M1254.5 814.8V874.1M1255.5 787.1V820.0M1255.5 820.0V884.0M1255.5 801.2V842.9M1256.5 789.9V870.3M1257.5 820.0V890.6M1258.5 803.6V820.0M1258.5 820.0V845.5M1258.5 803.6V832.5M1259.5 776.2V820.0M1259.5 775.0V903.0M1261.5 808.6V842.2M1262.5 769.4V820.0M1262.5 820.0V840.8M1262.5 752.1V871.1M1263.5 776.1V820.0M1263.5 820.0V843.4M1264.5 791.6V820.0M1265.5 787.7V820.0M1265.5 778.3V852.2M1267.5 795.8V820.0M1267.5 803.4V876.3M1268.5 779.5V856.4M1269.5 780.2V853.7M1270.5 800.2V820.0M1271.5 820.0V881.8M1271.5 780.9V850.2M1272.5 790.9V857.6M1273.5 779.7V820.0M1274.5 787.0V820.0M1274.5 820.0V847.1M1274.5 811.0V876.5M1275.5 781.2V820.0M1275.5 820.0V865.4M1276.5 763.0V820.0M1276.5 820.0V836.1M1277.5 820.0V881.3M1277.5 771.6V840.0M1278.5 789.7V820.0M1278.5 820.0V872.2M1279.5 820.0V829.9M1280.5 820.0V851.9M1282.5 782.5V853.4M1283.5 813.3V850.5M1284.5 769.4V820.0M1284.5 775.9V881.7M1285.5 785.5V864.0M1286.5 798.6V836.6M1287.5 791.2V820.0M1287.5 804.2V846.7M1288.5 762.7V820.0M1288.5 820.0V870.0M1289.5 793.5V820.0M1289.5 820.0V859.2M1290.5 820.0V881.9M1291.5 820.0V865.5M1291.5 762.2V877.4M1293.5 763.1V820.0M1294.5 820.0V890.3M1295.5 793.3V820.0M1295.5 771.1V868.7M1296.5 798.4V820.0M1296.5 820.0V858.0M1296.5 759.4V844.8M1298.5 810.5V820.0M1298.5 820.0V840.7M1299.5 764.9V820.0M1299.5 791.6V879.8M1300.5 786.8V820.0M1300.5 820.0V857.4M1300.5 773.3V870.3M1301.5 763.0V820.0M1301.5 820.0V905.2M1302.5 801.0V851.0M1303.5 783.1V820.0M1303.5 820.0V890.1M1303.5 767.1V890.1M1304.5 780.0V820.0M1304.5 820.0V833.9M1304.5 789.2V824.5M1305.5 820.0V853.1M1306.5 789.4V820.0M1306.5 803.0V874.2M1307.5 775.4V820.0M1307.5 820.0V859.0M1309.5 797.1V820.0M1309.5 820.0V870.4M1310.5 794.9V820.0M1310.5 820.0V881.5M1311.5 787.4V820.0M1311.5 820.0V857.9M1312.5 771.1V820.0M1312.5 820.0V885.6M1313.5 770.6V820.0M1314.5 762.6V820.0M1314.5 783.7V844.6M1315.5 809.7V820.0M1315.5 820.0V871.3M1315.5 802.0V840.9M1316.5 790.7V820.0M1317.5 781.0V820.0M1317.5 820.0V883.7M1319.5 820.0V831.7M1320.5 791.6V835.4M1321.5 792.1V820.0M1321.5 772.3V861.4M1322.5 776.1V820.0M1322.5 820.0V839.8M1322.5 759.1V868.5M1323.5 820.0V854.3M1324.5 789.1V820.0M1324.5 820.0V875.8M1324.5 795.7V874.6M1325.5 789.1V820.0M1325.5 771.5V821.8M1326.5 797.8V820.0M1326.5 774.6V837.3M1327.5 741.4V820.0M1327.5 820.0V871.6M1328.5 820.0V859.6M1328.5 780.5V842.7M1329.5 820.0V850.5M1330.5 820.0V833.0M1331.5 809.4V884.7M1332.5 745.0V820.0M1333.5 800.7V820.0M1333.5 820.0V857.4M1334.5 786.9V829.3M1336.5 762.8V820.0M1336.5 782.5V832.4M1338.5 776.4V820.0M1338.5 810.8V868.2M1339.5 799.4V863.1M1340.5 820.0V884.0M1340.5 766.9V834.6M1341.5 801.8V851.9M1342.5 784.9V855.3M1343.5 802.9V820.0M1343.5 820.0V864.9M1344.5 750.6V820.0M1344.5 771.8V867.3M1345.5 820.0V849.6M1346.5 785.0V820.0M1349.5 816.1V869.4M1350.5 788.5V820.0M1350.5 820.0V864.5M1351.5 820.0V854.2M1351.5 791.7V882.3M1352.5 786.2V820.0M1352.5 820.0V851.8M1352.5 781.6V862.3M1354.5 754.8V820.0M1354.5 820.0V837.8M1354.5 782.8V867.4M1355.5 820.0V856.3M1356.5 820.0V850.3M1356.5 793.2V849.4M1357.5 800.2V820.0M1357.5 784.6V822.6M1358.5 752.0V820.0M1358.5 820.0V856.5M1358.5 802.1V855.1M1359.5 798.3V867.5" stroke="#5f6967" stroke-width="1" fill="none"/><path d="M336.5 796.3V843.6M337.5 807.9V841.9M338.5 795.2V840.8M339.5 785.0V838.2M340.5 780.6V831.3M341.5 795.9V853.8M342.5 774.8V848.3M343.5 783.5V844.6M344.5 796.4V858.2M345.5 793.3V851.0M346.5 785.2V858.3M347.5 808.0V843.7M348.5 788.2V835.5M349.5 817.6V848.9M350.5 793.9V848.4M351.5 809.8V863.3M352.5 794.4V854.9M353.5 800.5V851.3M354.5 794.5V856.6M355.5 795.4V867.3M356.5 787.4V844.4M357.5 793.8V855.8M358.5 790.0V847.4M359.5 783.3V832.6M360.5 818.9V839.2M361.5 785.4V859.8M362.5 797.2V853.2M363.5 794.9V849.7M364.5 791.9V859.0M365.5 792.8V853.2M366.5 784.7V845.3M367.5 800.0V850.9M368.5 789.0V863.9M369.5 805.8V851.0M370.5 811.4V858.2M371.5 791.6V855.3M372.5 792.2V874.4M373.5 787.6V862.7M374.5 802.2V857.0M375.5 801.6V828.1M376.5 791.4V859.2M377.5 797.3V837.7M378.5 777.7V843.7M379.5 795.2V870.9M380.5 783.4V829.3M381.5 786.9V848.3M382.5 792.3V845.9M383.5 790.2V836.9M384.5 793.7V834.7M385.5 785.9V857.4M386.5 790.8V845.1M387.5 792.5V855.8M388.5 792.6V867.9M389.5 799.3V843.5M390.5 785.0V853.1M391.5 798.2V833.9M392.5 788.6V841.5M393.5 800.1V838.2M394.5 789.0V847.9M395.5 810.2V854.9M396.5 798.4V860.6M397.5 783.8V838.1M398.5 783.9V857.5M399.5 796.2V854.4M400.5 793.7V858.8M401.5 797.5V863.3M402.5 801.0V854.9M403.5 786.9V841.5M404.5 813.9V842.9M405.5 801.9V840.5M406.5 792.1V843.5M407.5 781.6V863.2M408.5 773.0V846.1M409.5 779.3V842.1M410.5 791.0V855.1M411.5 773.4V830.5M412.5 792.3V853.6M413.5 814.1V853.3M414.5 784.4V853.0M415.5 783.3V848.5M416.5 802.7V845.4M417.5 798.7V857.5M418.5 788.9V849.6M419.5 799.5V854.9M420.5 801.1V854.3M421.5 778.4V860.1M422.5 795.0V847.4M423.5 799.8V859.5M424.5 811.6V839.4M425.5 807.3V843.3M426.5 801.1V840.2M427.5 784.7V839.3M428.5 786.2V843.1M429.5 791.0V859.3M430.5 799.9V862.0M431.5 800.4V843.7M432.5 792.3V857.8M433.5 800.0V833.6M434.5 809.0V847.4M435.5 800.0V853.4M436.5 791.7V840.5M437.5 799.9V871.4M438.5 799.9V842.2M439.5 783.2V867.5M440.5 805.9V842.8M441.5 789.0V842.8M442.5 786.0V854.6M443.5 801.7V851.8M444.5 792.5V850.3M445.5 790.5V845.4M446.5 803.2V855.0M447.5 813.0V850.7M448.5 791.0V864.2M449.5 798.5V855.3M450.5 780.0V856.6M451.5 794.1V849.7M452.5 799.8V862.3M453.5 792.9V849.9M454.5 791.3V841.9M455.5 799.1V866.4M456.5 801.9V853.6M457.5 786.2V863.3M458.5 783.0V833.5M459.5 809.8V858.6M460.5 788.1V846.9M461.5 811.0V836.7M462.5 798.3V854.2M463.5 790.0V841.3M464.5 815.4V854.0M465.5 791.9V836.6M466.5 791.4V850.6M467.5 794.6V826.0M468.5 787.0V849.4M469.5 804.9V856.6M470.5 798.1V822.8M471.5 798.2V843.6M472.5 794.5V834.2M473.5 800.1V832.0M474.5 793.3V849.5M475.5 803.4V833.4M476.5 806.0V849.1M477.5 806.0V854.5M478.5 792.2V840.6M479.5 806.0V853.5M480.5 817.3V850.9M481.5 794.8V853.0M482.5 782.6V840.1M483.5 801.6V860.0M484.5 790.1V840.0M485.5 793.0V843.5M486.5 786.2V844.6M487.5 808.1V857.4M488.5 809.9V842.0M489.5 798.0V830.0M490.5 796.9V850.5M491.5 807.5V861.0M492.5 793.8V843.2M493.5 794.1V857.1M494.5 807.6V848.6M495.5 801.3V853.2M496.5 799.2V846.8M497.5 806.9V849.1M498.5 802.5V863.3M499.5 796.5V857.3M500.5 796.1V835.3M501.5 802.5V843.9M502.5 809.2V847.8M503.5 790.1V846.1M504.5 788.7V843.1M505.5 801.3V849.2M506.5 798.9V841.7M507.5 812.1V835.0M508.5 798.1V833.9M509.5 810.5V852.7M510.5 808.2V851.8M511.5 799.9V843.8M512.5 804.3V841.7M513.5 801.3V840.6M514.5 794.1V859.7M515.5 801.9V853.2M516.5 797.2V839.6M517.5 801.3V828.5M518.5 800.0V830.4M519.5 804.8V849.8M520.5 799.1V852.5M521.5 797.8V847.0M522.5 782.4V851.3M523.5 788.8V843.9M524.5 797.4V846.8M525.5 805.5V852.6M526.5 786.0V845.4M527.5 809.6V836.7M528.5 814.3V841.4M529.5 797.4V863.8M530.5 797.7V846.8M531.5 809.1V847.8M532.5 807.2V825.9M533.5 800.4V860.1M534.5 784.1V858.6M535.5 796.0V847.2M536.5 806.1V842.6M537.5 804.4V845.7M538.5 799.5V853.3M539.5 783.8V860.4M540.5 803.1V847.3M541.5 798.7V847.1M542.5 796.9V848.6M543.5 800.8V848.9M544.5 792.0V838.0M545.5 811.8V848.0M546.5 807.5V858.3M547.5 803.8V825.4M548.5 788.3V841.5M549.5 805.6V851.1M550.5 791.3V849.7M551.5 801.8V841.3M552.5 791.4V855.4M553.5 800.1V844.8M554.5 800.4V832.8M555.5 810.5V850.7M556.5 792.2V840.2M557.5 800.7V862.7M558.5 790.2V853.9M559.5 800.6V859.3M560.5 815.4V854.7M561.5 784.6V857.8M562.5 789.1V864.1M563.5 795.4V858.1M564.5 791.5V859.3M565.5 795.7V875.9M566.5 796.9V842.6M567.5 803.9V865.4M568.5 804.9V836.4M569.5 799.5V858.5M570.5 797.6V865.0M571.5 789.5V845.2M572.5 789.9V837.5M573.5 805.9V863.3M574.5 805.2V840.6M575.5 796.9V855.8M576.5 793.2V848.1M577.5 791.4V845.6M578.5 797.2V844.3M579.5 791.6V830.9M580.5 800.1V857.6M581.5 800.5V835.5M582.5 796.6V844.7M583.5 802.3V857.8M584.5 790.0V847.4M585.5 790.6V868.1M586.5 795.5V849.4M587.5 797.4V854.1M588.5 797.7V841.0M589.5 804.3V829.5M590.5 801.5V852.4M591.5 803.4V852.2M592.5 793.8V854.6M593.5 795.4V842.8M594.5 780.6V842.6M595.5 785.4V843.1M596.5 805.4V865.7M597.5 799.3V843.3M598.5 783.0V867.5M599.5 792.5V838.8M600.5 778.4V836.2M601.5 806.2V861.8M602.5 804.3V853.9M603.5 789.8V846.4M604.5 777.8V858.4M605.5 803.3V845.2M606.5 800.9V862.4M607.5 800.1V859.6M608.5 795.3V840.9M609.5 775.8V854.3M610.5 794.7V863.1M611.5 796.1V835.3M612.5 796.8V860.4M613.5 795.9V856.5M614.5 792.0V861.9M615.5 804.2V855.6M616.5 808.1V854.6M617.5 784.6V853.6M618.5 790.3V831.7M619.5 796.0V848.5M620.5 781.1V853.8M621.5 788.2V865.9M622.5 800.9V869.8M623.5 797.0V840.9M624.5 786.0V850.1M625.5 790.9V847.2M626.5 790.4V837.9M627.5 804.3V828.6M628.5 795.0V833.1M629.5 794.1V838.5M630.5 791.9V847.0M631.5 798.8V844.9M632.5 807.1V860.4M633.5 793.4V857.3M634.5 786.5V850.9M635.5 791.8V837.6M636.5 802.8V853.4M637.5 786.7V833.4M638.5 789.3V876.8M639.5 803.2V851.6M640.5 798.6V864.0M641.5 775.5V870.0M642.5 782.8V837.6M643.5 796.3V872.3M644.5 788.0V866.9M645.5 799.2V855.0M646.5 793.1V876.0M647.5 777.7V848.3M648.5 803.9V845.3M649.5 789.7V849.9M650.5 784.4V848.7M651.5 793.9V835.8M652.5 793.0V864.6M653.5 802.3V840.1M654.5 812.0V856.7M655.5 803.5V840.4M656.5 781.8V862.0M657.5 796.2V848.2M658.5 800.2V860.8M659.5 797.5V861.5M660.5 804.7V853.6M661.5 794.4V856.5M662.5 793.6V834.0M663.5 780.2V862.9M664.5 799.0V851.0M665.5 814.9V859.6M666.5 795.9V858.3M667.5 796.3V856.0M668.5 790.4V840.8M669.5 795.2V843.0M670.5 792.5V835.8M671.5 818.2V848.5M672.5 783.7V842.1M673.5 792.9V836.0M674.5 807.6V850.7M675.5 787.3V852.1M676.5 797.5V847.7M677.5 782.4V852.2M678.5 803.2V841.8M679.5 797.2V856.9M680.5 791.4V833.9M681.5 791.3V832.3M682.5 789.2V823.7M683.5 796.9V869.1M684.5 795.4V849.2M685.5 811.9V857.9M686.5 804.3V843.4M687.5 799.6V828.1M688.5 791.0V852.8M689.5 797.9V854.8M690.5 795.7V856.1M691.5 789.3V866.3M692.5 803.6V861.0M693.5 781.0V843.1M694.5 786.6V858.6M695.5 781.4V831.6M696.5 800.7V860.3M697.5 793.7V841.9M698.5 799.2V845.7M699.5 789.1V823.0M700.5 802.6V850.5M701.5 789.1V844.3M702.5 804.6V838.1M703.5 807.8V841.7M704.5 802.9V840.7M705.5 811.5V832.7M706.5 799.0V846.4M707.5 817.7V857.9M708.5 812.5V842.9M709.5 786.0V844.3M710.5 799.9V834.1M711.5 798.7V854.3M712.5 796.9V860.6M713.5 800.0V870.5M714.5 802.5V862.7M715.5 805.0V845.6M716.5 796.8V859.0M717.5 796.2V857.9M718.5 795.7V834.2M719.5 803.2V843.9M720.5 792.3V855.7M721.5 790.6V832.1M722.5 789.4V870.9M723.5 785.2V858.3M724.5 792.8V840.4M725.5 795.2V840.1M726.5 799.1V830.4M727.5 804.8V853.1M728.5 789.8V840.7M729.5 797.5V862.5M730.5 798.5V845.2M731.5 797.0V850.2M732.5 812.3V848.9M733.5 800.9V850.1M734.5 803.1V838.6M735.5 789.4V856.9M736.5 795.1V854.0M737.5 816.8V846.7M738.5 793.8V854.0M739.5 800.3V846.8M740.5 793.7V836.5M741.5 796.2V831.3M742.5 791.0V847.3M743.5 804.6V836.3M744.5 791.6V840.7M745.5 791.7V833.6M746.5 793.0V859.4M747.5 795.5V854.5M748.5 793.1V847.4M749.5 802.2V843.1M750.5 801.9V841.4M751.5 798.6V838.3M752.5 800.0V831.9M753.5 793.3V842.8M754.5 798.2V854.4M755.5 785.9V848.1M756.5 800.0V843.5M757.5 808.8V843.2M758.5 785.5V841.1M759.5 797.9V838.8M760.5 803.2V847.7M761.5 789.7V844.9M762.5 792.6V841.3M763.5 792.9V830.2M764.5 783.8V839.1M765.5 793.9V828.9M766.5 805.3V858.0M767.5 806.0V838.6M768.5 799.2V836.4M769.5 797.3V860.9M770.5 811.5V841.6M771.5 793.7V837.3M772.5 806.3V841.5M773.5 786.5V848.1M774.5 797.1V850.5M775.5 808.4V836.8M776.5 791.1V837.7M777.5 799.8V852.3M778.5 787.1V845.5M779.5 808.5V837.0M780.5 792.0V842.2M781.5 803.7V850.4M782.5 814.5V846.3M783.5 787.0V837.8M784.5 790.7V843.4M785.5 792.6V867.3M786.5 797.0V846.2M787.5 793.0V856.7M788.5 792.9V829.8M789.5 786.9V851.1M790.5 796.4V845.8M791.5 795.7V861.2M792.5 785.3V870.6M793.5 783.7V866.2M794.5 805.6V853.1M795.5 783.2V861.7M796.5 788.9V858.1M797.5 797.5V857.3M798.5 786.2V851.2M799.5 791.1V847.4M800.5 813.8V830.9M801.5 789.4V854.9M802.5 792.3V846.5M803.5 803.7V839.9M804.5 813.9V848.7M805.5 793.9V843.0M806.5 790.2V854.6M807.5 806.8V864.3M808.5 786.4V842.8M809.5 804.0V857.0M810.5 795.6V848.7M811.5 787.2V852.0M812.5 791.6V857.9M813.5 784.4V841.8M814.5 794.6V859.4M815.5 795.1V831.3M816.5 796.6V841.9M817.5 795.5V853.1M818.5 808.0V863.0M819.5 799.9V840.6M820.5 787.3V856.8M821.5 793.9V855.3M822.5 796.4V844.1M823.5 784.2V842.0M824.5 814.7V852.2M825.5 791.8V865.8M826.5 805.0V846.3M827.5 789.3V860.6M828.5 785.6V838.1M829.5 786.2V864.7M830.5 784.7V837.9M831.5 779.8V866.1M832.5 806.7V855.4M833.5 790.5V855.8M834.5 783.4V841.4M835.5 787.8V874.8M836.5 783.5V857.2M837.5 789.7V858.6M838.5 774.1V861.8M839.5 805.1V851.9M840.5 783.7V848.5M841.5 788.8V855.8M842.5 804.5V862.1M843.5 789.0V846.5M844.5 802.2V852.6M845.5 784.8V850.2M846.5 786.7V838.6M847.5 800.7V829.2M848.5 807.6V837.6M849.5 786.1V841.6M850.5 783.5V861.1M851.5 812.4V849.5M852.5 814.3V876.3M853.5 804.6V836.7M854.5 797.8V837.7M855.5 797.4V864.1M856.5 794.4V841.6M857.5 807.1V856.9M858.5 798.2V856.5M859.5 797.0V829.9M860.5 786.8V849.7M861.5 814.4V853.5M862.5 797.0V847.0M863.5 805.5V841.4M864.5 807.0V859.7M865.5 790.2V851.2M866.5 778.6V846.4M867.5 815.7V848.2M868.5 792.9V844.5M869.5 786.2V862.6M870.5 791.4V869.0M871.5 795.0V839.2M872.5 791.5V875.0M873.5 789.9V851.3M874.5 785.2V853.5M875.5 796.4V848.9M876.5 774.4V854.2M877.5 791.4V842.4M878.5 785.3V840.9M879.5 796.1V872.1M880.5 792.5V864.8M881.5 783.3V857.8M882.5 796.0V868.0M883.5 808.4V833.8M884.5 799.5V845.8M885.5 793.4V840.7M886.5 789.1V867.7M887.5 804.8V844.1M888.5 785.0V840.2M889.5 803.5V856.4M890.5 790.6V846.1M891.5 786.8V844.4M892.5 807.7V844.8M893.5 804.2V852.9M894.5 781.8V848.1M895.5 790.3V850.2M896.5 810.2V860.1M897.5 802.0V869.1M898.5 806.3V857.0M899.5 793.6V850.6M900.5 803.1V828.2M901.5 798.5V855.7M902.5 800.4V849.5M903.5 784.8V843.3M904.5 799.6V841.8M905.5 792.2V845.7M906.5 797.4V848.1M907.5 798.9V853.1M908.5 811.2V845.4M909.5 791.7V863.2M910.5 800.7V861.2M911.5 780.8V866.3M912.5 794.3V841.8M913.5 811.1V868.0M914.5 788.5V834.7M915.5 787.9V848.9M916.5 791.4V856.2M917.5 799.8V859.9M918.5 803.2V854.3M919.5 785.1V853.1M920.5 776.9V836.0M921.5 781.4V842.2M922.5 791.6V847.8M923.5 798.4V838.9M924.5 787.6V844.9M925.5 795.0V844.5M926.5 807.3V841.0M927.5 802.6V828.0M928.5 799.5V855.7M929.5 799.5V840.5M930.5 803.6V841.5M931.5 793.1V853.7M932.5 796.4V848.8M933.5 789.2V850.6M934.5 808.9V839.6M935.5 788.7V823.5M936.5 803.3V842.9M937.5 801.2V853.5M938.5 793.0V846.0M939.5 799.1V856.2M940.5 792.4V851.3M941.5 791.9V828.8M942.5 791.5V871.9M943.5 806.8V854.3M944.5 783.0V857.7M945.5 800.3V831.1M946.5 810.3V857.2M947.5 793.9V851.5M948.5 809.9V852.7M949.5 798.1V836.6M950.5 796.7V838.4M951.5 805.6V842.2M952.5 794.8V855.3M953.5 804.0V860.0M954.5 804.9V860.2M955.5 788.7V843.1M956.5 800.1V845.1M957.5 790.3V838.2M958.5 815.1V849.7M959.5 796.6V855.2M960.5 794.9V857.9M961.5 791.0V855.7M962.5 811.1V868.2M963.5 801.9V843.2M964.5 805.0V845.1M965.5 802.5V854.7M966.5 795.4V837.3M967.5 803.5V846.2M968.5 802.9V848.6M969.5 800.2V844.2M970.5 796.3V843.3M971.5 797.9V835.8M972.5 804.8V832.3M973.5 805.6V853.6M974.5 805.6V849.3M975.5 811.4V865.1M976.5 797.5V842.9M977.5 793.4V859.5M978.5 796.5V846.7M979.5 800.7V849.4M980.5 795.7V854.7M981.5 795.8V847.4M982.5 803.6V837.8M983.5 800.7V846.9M984.5 804.9V841.7M985.5 813.3V826.8M986.5 805.9V847.1M987.5 807.7V837.5M988.5 789.4V851.0M989.5 800.4V839.6M990.5 802.4V855.5M991.5 810.0V843.1M992.5 798.1V830.5M993.5 782.9V859.7M994.5 791.0V846.1M995.5 788.0V847.9M996.5 786.6V849.6M997.5 801.5V856.4M998.5 805.6V869.4M999.5 796.0V859.2M1000.5 797.7V859.1M1001.5 793.3V858.9M1002.5 786.6V845.8M1003.5 808.5V833.0M1004.5 789.3V830.3M1005.5 791.9V852.2M1006.5 807.2V838.5M1007.5 796.1V845.2M1008.5 789.1V856.7M1009.5 792.3V825.1M1010.5 805.9V848.5M1011.5 803.1V858.6M1012.5 793.3V834.6M1013.5 799.9V852.6M1014.5 807.4V864.8M1015.5 803.8V850.1M1016.5 792.9V835.0M1017.5 794.7V841.1M1018.5 787.1V853.2M1019.5 779.6V852.4M1020.5 802.6V846.4M1021.5 786.6V861.8M1022.5 791.6V849.5M1023.5 791.9V856.2M1024.5 798.8V862.9M1025.5 800.5V847.4M1026.5 802.4V863.1M1027.5 801.4V850.7M1028.5 798.7V850.0M1029.5 787.6V846.7M1030.5 789.9V843.1M1031.5 792.9V855.0M1032.5 785.5V851.7M1033.5 798.0V866.4M1034.5 803.5V866.2M1035.5 803.3V840.9M1036.5 810.5V855.2M1037.5 797.4V845.2M1038.5 792.7V851.9M1039.5 791.7V846.3M1040.5 788.4V830.9M1041.5 810.5V836.4M1042.5 806.5V856.3M1043.5 799.9V855.3M1044.5 806.1V857.5M1045.5 792.0V841.8M1046.5 784.6V843.4M1047.5 804.7V840.0M1048.5 785.5V837.3M1049.5 793.7V837.4M1050.5 804.8V842.6M1051.5 804.0V835.2M1052.5 795.0V852.7M1053.5 794.1V851.6M1054.5 790.5V848.2M1055.5 801.1V865.0M1056.5 787.4V859.0M1057.5 792.9V855.8M1058.5 814.6V832.5M1059.5 795.6V848.3M1060.5 788.5V863.6M1061.5 796.5V838.9M1062.5 782.6V839.7M1063.5 784.3V859.0M1064.5 781.3V854.6M1065.5 782.0V865.2M1066.5 806.5V838.0M1067.5 790.3V834.3M1068.5 779.5V850.9M1069.5 788.6V863.4M1070.5 792.5V855.0M1071.5 789.6V856.0M1072.5 788.2V860.9M1073.5 782.3V831.6M1074.5 788.9V837.4M1075.5 788.5V844.7M1076.5 781.0V853.0M1077.5 781.3V849.3M1078.5 805.4V839.5M1079.5 802.1V835.3M1080.5 800.9V848.7M1081.5 801.6V851.6M1082.5 814.7V849.3M1083.5 789.1V866.9M1084.5 791.1V842.2M1085.5 790.7V862.0M1086.5 804.7V858.3M1087.5 798.6V839.1M1088.5 809.5V869.0M1089.5 801.0V853.6M1090.5 795.8V832.5M1091.5 800.5V826.3M1092.5 793.7V854.5M1093.5 787.9V849.2M1094.5 796.7V869.4M1095.5 802.9V851.1M1096.5 793.0V867.4M1097.5 805.7V852.7M1098.5 795.0V844.2M1099.5 797.2V847.0M1100.5 784.6V846.9M1101.5 802.7V847.6M1102.5 810.2V835.0M1103.5 785.3V863.3M1104.5 796.0V853.6M1105.5 799.9V862.0M1106.5 779.6V831.1M1107.5 770.1V853.8M1108.5 803.7V883.6M1109.5 792.0V856.5M1110.5 796.2V851.9M1111.5 803.9V847.3M1112.5 776.3V857.9M1113.5 796.3V862.1M1114.5 810.1V872.0M1115.5 797.1V846.0M1116.5 788.0V843.8M1117.5 805.2V848.1M1118.5 803.5V865.3M1119.5 793.8V833.1M1120.5 786.4V835.1M1121.5 790.9V853.7M1122.5 804.3V839.2M1123.5 786.0V865.6M1124.5 803.6V834.2M1125.5 799.8V848.1M1126.5 797.9V852.9M1127.5 807.3V858.6M1128.5 801.3V843.4M1129.5 795.2V857.1M1130.5 795.6V859.3M1131.5 785.1V867.9M1132.5 795.4V851.8M1133.5 790.4V851.6M1134.5 809.9V841.9M1135.5 793.7V873.7M1136.5 781.8V850.2M1137.5 798.4V850.0M1138.5 790.6V849.6M1139.5 792.0V840.4M1140.5 792.4V844.3M1141.5 783.3V869.9M1142.5 807.5V842.7M1143.5 808.2V856.3M1144.5 778.4V846.2M1145.5 793.4V851.4M1146.5 789.4V842.6M1147.5 784.0V858.2M1148.5 791.9V853.4M1149.5 802.4V849.9M1150.5 781.6V845.2M1151.5 801.2V864.9M1152.5 789.3V845.8M1153.5 794.7V852.3M1154.5 809.4V848.6M1155.5 796.8V838.2M1156.5 809.3V864.0M1157.5 801.7V845.5M1158.5 803.5V836.8M1159.5 801.5V846.9M1160.5 786.4V847.6M1161.5 800.0V851.0M1162.5 794.8V834.4M1163.5 797.1V832.3M1164.5 790.7V847.5M1165.5 797.3V836.6M1166.5 790.0V841.6M1167.5 793.1V844.0M1168.5 790.9V839.1M1169.5 793.2V843.3M1170.5 793.7V845.8M1171.5 796.7V850.6M1172.5 797.0V832.5M1173.5 801.2V847.3M1174.5 808.0V854.7M1175.5 803.0V846.1M1176.5 783.3V849.8M1177.5 789.6V844.0M1178.5 795.5V863.3M1179.5 795.1V843.0M1180.5 797.8V842.7M1181.5 806.7V847.6M1182.5 790.0V849.4M1183.5 801.2V835.4M1184.5 792.5V841.8M1185.5 793.9V848.3M1186.5 796.5V833.8M1187.5 793.2V855.4M1188.5 786.4V839.1M1189.5 786.7V852.6M1190.5 796.1V845.6M1191.5 808.7V846.6M1192.5 794.2V858.0M1193.5 805.4V834.8M1194.5 802.6V855.1M1195.5 794.7V849.7M1196.5 793.2V836.9M1197.5 790.6V833.9M1198.5 797.8V843.1M1199.5 809.2V840.5M1200.5 797.9V832.6M1201.5 799.2V842.1M1202.5 807.0V828.3M1203.5 799.6V848.4M1204.5 790.7V840.9M1205.5 797.9V841.2M1206.5 800.9V858.8M1207.5 809.3V834.8M1208.5 815.0V837.4M1209.5 803.2V847.3M1210.5 812.5V850.2M1211.5 791.5V838.6M1212.5 798.5V851.3M1213.5 804.5V852.8M1214.5 790.1V841.1M1215.5 787.0V841.3M1216.5 797.3V834.2M1217.5 799.9V841.8M1218.5 786.4V842.0M1219.5 797.0V864.8M1220.5 794.0V836.3M1221.5 803.9V837.9M1222.5 817.7V847.9M1223.5 795.5V857.2M1224.5 813.7V836.5M1225.5 804.6V844.0M1226.5 811.1V828.6M1227.5 812.7V847.7M1228.5 800.1V846.1M1229.5 789.0V850.6M1230.5 799.7V846.4M1231.5 789.3V841.7M1232.5 795.3V843.7M1233.5 787.3V832.9M1234.5 791.9V854.0M1235.5 804.2V847.7M1236.5 796.4V845.5M1237.5 802.9V825.4M1238.5 802.4V835.0M1239.5 799.5V844.7M1240.5 794.5V855.4M1241.5 801.0V864.3M1242.5 789.7V839.6M1243.5 808.9V852.2M1244.5 804.6V841.2M1245.5 797.8V851.8M1246.5 799.6V858.2M1247.5 803.2V834.1M1248.5 793.3V857.2M1249.5 790.1V848.2M1250.5 797.1V844.6M1251.5 803.2V848.0M1252.5 777.4V862.0M1253.5 788.3V852.4M1254.5 798.0V846.1M1255.5 789.5V828.0M1256.5 803.6V846.4M1257.5 812.1V832.1M1258.5 817.5V866.7M1259.5 795.0V830.8M1260.5 813.6V849.9M1261.5 776.3V845.5M1262.5 803.9V859.5M1263.5 793.0V848.2M1264.5 806.3V853.0M1265.5 788.4V839.1M1266.5 796.4V867.5M1267.5 787.8V864.7M1268.5 816.2V853.2M1269.5 785.6V842.7M1270.5 798.0V846.4M1271.5 806.8V847.4M1272.5 806.6V829.5M1273.5 799.6V838.6M1274.5 790.8V861.1M1275.5 791.7V850.0M1276.5 803.0V857.0M1277.5 812.9V856.5M1278.5 797.2V853.0M1279.5 803.2V846.0M1280.5 786.2V834.7M1281.5 806.4V846.9M1282.5 803.1V844.8M1283.5 798.2V833.8M1284.5 786.8V852.4M1285.5 802.3V855.6M1286.5 792.3V849.3M1287.5 800.3V823.3M1288.5 787.6V846.0M1289.5 787.7V853.0M1290.5 794.3V851.1M1291.5 804.9V851.6M1292.5 789.7V850.7M1293.5 801.6V866.2M1294.5 808.6V862.3M1295.5 803.2V837.2M1296.5 789.9V855.6M1297.5 784.3V867.6M1298.5 776.7V854.7M1299.5 789.9V854.2M1300.5 789.3V856.9M1301.5 786.9V848.5M1302.5 788.4V845.7M1303.5 796.9V842.5M1304.5 795.0V851.8M1305.5 789.9V846.1M1306.5 789.1V853.9M1307.5 793.1V855.8M1308.5 791.7V845.8M1309.5 791.7V841.9M1310.5 808.4V838.0M1311.5 801.0V853.6M1312.5 808.9V856.1M1313.5 805.2V850.1M1314.5 812.7V850.9M1315.5 795.2V858.1M1316.5 795.4V858.3M1317.5 783.3V859.4M1318.5 787.7V850.3M1319.5 809.4V849.6M1320.5 798.9V829.4M1321.5 786.8V850.2M1322.5 794.4V869.4M1323.5 786.5V857.5M1324.5 798.2V867.9M1325.5 788.7V826.8M1326.5 804.3V848.7M1327.5 803.3V849.8M1328.5 783.6V861.2M1329.5 795.3V849.1M1330.5 797.4V855.2M1331.5 772.1V835.6M1332.5 801.0V874.4M1333.5 789.9V860.8M1334.5 797.4V833.6M1335.5 780.8V852.2M1336.5 788.6V842.6M1337.5 803.0V863.8M1338.5 801.2V871.7M1339.5 795.3V868.0M1340.5 790.3V855.7M1341.5 789.1V873.2M1342.5 786.2V860.4M1343.5 798.1V857.7M1344.5 802.1V862.1M1345.5 797.6V862.8M1346.5 784.7V850.8M1347.5 784.1V839.1M1348.5 791.4V823.8M1349.5 791.7V847.1M1350.5 783.5V858.2M1351.5 787.6V847.7M1352.5 782.1V854.8M1353.5 791.3V855.1M1354.5 793.2V847.5M1355.5 794.9V832.8M1356.5 805.4V847.9M1357.5 791.6V847.8M1358.5 794.6V831.0M1359.5 803.3V852.8" stroke="#2f3836" stroke-width="1" fill="none" opacity="0.3"/><path d="M336.5 820.0V851.5M337.5 820.0V835.7M339.5 815.4V820.0M339.5 820.0V845.2M340.5 756.9V820.0M340.5 820.0V821.8M341.5 797.5V820.0M341.5 820.0V869.1M342.5 748.6V820.0M342.5 820.0V857.0M344.5 783.9V820.0M344.5 820.0V856.6M345.5 820.0V842.4M347.5 820.0V849.3M348.5 769.0V820.0M349.5 790.3V820.0M350.5 803.0V820.0M351.5 820.0V838.8M352.5 782.4V820.0M353.5 791.4V820.0M353.5 820.0V895.4M354.5 789.5V820.0M355.5 789.7V820.0M355.5 820.0V844.1M356.5 764.8V820.0M358.5 759.6V820.0M359.5 820.0V866.1M361.5 775.1V820.0M362.5 817.3V820.0M363.5 820.0V857.2M364.5 778.2V820.0M364.5 820.0V852.8M365.5 777.3V820.0M365.5 820.0V844.5M366.5 820.0V892.7M367.5 820.0V851.3M368.5 820.0V845.0M369.5 755.5V820.0M369.5 820.0V853.2M371.5 780.9V820.0M372.5 751.5V820.0M373.5 754.3V820.0M375.5 747.5V820.0M375.5 820.0V880.0M376.5 820.0V852.2M378.5 796.3V820.0M379.5 771.6V820.0M380.5 820.0V846.4M381.5 820.0V857.4M382.5 820.0V851.7M383.5 783.2V820.0M384.5 820.0V884.3M385.5 797.6V820.0M385.5 820.0V889.2M386.5 772.9V820.0M386.5 820.0V869.4M387.5 767.9V820.0M387.5 820.0V862.1M388.5 820.0V876.4M389.5 820.0V866.6M390.5 805.6V820.0M390.5 820.0V887.9M391.5 820.0V863.4M393.5 764.6V820.0M393.5 820.0V836.0M394.5 744.5V820.0M395.5 820.0V836.5M396.5 820.0V857.3M397.5 774.5V820.0M401.5 767.4V820.0M404.5 820.0V829.7M405.5 783.4V820.0M405.5 820.0V845.7M407.5 799.8V820.0M407.5 820.0V870.3M410.5 820.0V849.7M411.5 781.1V820.0M412.5 807.1V820.0M415.5 765.3V820.0M415.5 820.0V869.7M416.5 771.9V820.0M416.5 820.0V871.9M418.5 747.6V820.0M419.5 820.0V850.9M420.5 808.4V820.0M421.5 820.0V866.9M422.5 820.0V859.7M423.5 781.0V820.0M423.5 820.0V865.5M424.5 779.9V820.0M426.5 755.0V820.0M426.5 820.0V855.9M429.5 785.3V820.0M431.5 776.0V820.0M432.5 796.5V820.0M433.5 803.7V820.0M434.5 797.4V820.0M435.5 820.0V856.6M436.5 820.0V892.6M438.5 792.1V820.0M438.5 820.0V857.5M439.5 788.8V820.0M440.5 804.9V820.0M441.5 800.6V820.0M441.5 820.0V884.4M442.5 820.0V860.5M443.5 820.0V876.9M444.5 778.2V820.0M445.5 820.0V851.0M446.5 820.0V841.9M447.5 775.4V820.0M447.5 820.0V842.4M449.5 787.0V820.0M450.5 778.5V820.0M450.5 820.0V878.1M452.5 802.1V820.0M453.5 802.1V820.0M453.5 820.0V836.9M456.5 820.0V903.2M457.5 774.9V820.0M457.5 820.0V852.0M458.5 820.0V848.9M459.5 820.0V846.6M460.5 820.0V856.6M461.5 820.0V879.6M462.5 794.2V820.0M462.5 820.0V870.6M463.5 806.5V820.0M465.5 820.0V830.3M466.5 757.4V820.0M466.5 820.0V863.1M467.5 769.5V820.0M468.5 820.0V850.3M469.5 820.0V843.2M470.5 760.1V820.0M471.5 800.1V820.0M472.5 800.4V820.0M474.5 754.0V820.0M476.5 820.0V860.0M477.5 820.0V880.6M478.5 751.8V820.0M479.5 820.0V858.3M480.5 820.0V886.2M481.5 775.0V820.0M483.5 780.6V820.0M484.5 807.2V820.0M485.5 820.0V875.2M486.5 804.1V820.0M487.5 811.9V820.0M487.5 820.0V855.8M488.5 760.4V820.0M488.5 820.0V868.8M489.5 778.6V820.0M490.5 759.8V820.0M490.5 820.0V852.3M491.5 795.4V820.0M491.5 820.0V869.8M492.5 820.0V862.5M493.5 820.0V900.0M494.5 820.0V869.1M495.5 820.0V854.0M496.5 820.0V830.5M497.5 785.4V820.0M497.5 820.0V831.3M498.5 820.0V849.9M499.5 779.6V820.0M499.5 820.0V833.9M500.5 796.6V820.0M500.5 820.0V827.8M501.5 775.3V820.0M502.5 798.6V820.0M502.5 820.0V876.2M503.5 795.6V820.0M503.5 820.0V852.2M505.5 806.7V820.0M505.5 820.0V871.2M506.5 808.3V820.0M506.5 820.0V851.0M508.5 787.2V820.0M508.5 820.0V851.2M509.5 818.0V820.0M511.5 787.2V820.0M511.5 820.0V853.9M512.5 802.5V820.0M513.5 803.8V820.0M513.5 820.0V871.7M515.5 820.0V857.3M516.5 764.2V820.0M517.5 820.0V876.6M518.5 796.9V820.0M519.5 770.5V820.0M519.5 820.0V875.9M520.5 820.0V858.6M522.5 795.3V820.0M522.5 820.0V856.4M523.5 775.1V820.0M524.5 800.6V820.0M525.5 768.9V820.0M525.5 820.0V840.4M526.5 820.0V872.7M527.5 793.0V820.0M528.5 820.0V841.7M529.5 752.8V820.0M529.5 820.0V864.8M530.5 820.0V834.2M531.5 820.0V862.3M532.5 784.9V820.0M532.5 820.0V834.1M533.5 784.2V820.0M535.5 767.9V820.0M536.5 774.7V820.0M537.5 779.6V820.0M538.5 792.0V820.0M538.5 820.0V846.0M539.5 820.0V839.1M540.5 751.6V820.0M540.5 820.0V868.0M541.5 775.8V820.0M541.5 820.0V889.5M546.5 800.9V820.0M548.5 777.5V820.0M549.5 820.0V857.5M551.5 790.1V820.0M551.5 820.0V858.4M553.5 820.0V855.7M554.5 772.0V820.0M554.5 820.0V863.8M555.5 820.0V879.7M556.5 794.1V820.0M557.5 820.0V846.0M558.5 820.0V889.4M559.5 776.8V820.0M559.5 820.0V858.9M560.5 793.4V820.0M560.5 820.0V859.9M562.5 776.9V820.0M563.5 820.0V831.8M564.5 820.0V856.2M565.5 791.0V820.0M565.5 820.0V823.0M566.5 796.9V820.0M566.5 820.0V871.4M567.5 820.0V877.4M568.5 774.5V820.0M569.5 820.0V873.9M570.5 771.6V820.0M570.5 820.0V871.3M571.5 814.0V820.0M571.5 820.0V874.7M572.5 820.0V851.3M573.5 820.0V881.2M574.5 779.8V820.0M574.5 820.0V873.5M575.5 792.4V820.0M575.5 820.0V841.8M577.5 787.1V820.0M577.5 820.0V885.5M578.5 753.9V820.0M579.5 778.7V820.0M579.5 820.0V856.6M581.5 780.8V820.0M582.5 820.0V863.1M584.5 761.2V820.0M586.5 820.0V839.8M587.5 790.2V820.0M588.5 793.2V820.0M589.5 820.0V858.0M591.5 820.0V852.6M593.5 735.8V820.0M594.5 754.6V820.0M595.5 767.8V820.0M596.5 766.0V820.0M596.5 820.0V857.3M597.5 758.3V820.0M597.5 820.0V874.1M600.5 798.0V820.0M600.5 820.0V867.3M602.5 820.0V901.2M604.5 793.3V820.0M605.5 764.3V820.0M607.5 762.8V820.0M608.5 786.8V820.0M610.5 752.9V820.0M610.5 820.0V900.0M611.5 746.5V820.0M612.5 748.3V820.0M612.5 820.0V899.4M613.5 820.0V870.2M614.5 785.3V820.0M615.5 820.0V843.0M616.5 805.0V820.0M618.5 813.5V820.0M619.5 820.0V881.7M620.5 761.6V820.0M622.5 820.0V877.7M623.5 773.9V820.0M623.5 820.0V845.3M624.5 801.2V820.0M624.5 820.0V844.3M625.5 742.6V820.0M625.5 820.0V851.0M626.5 820.0V863.8M627.5 758.9V820.0M627.5 820.0V875.7M628.5 807.9V820.0M628.5 820.0V871.7M629.5 820.0V875.1M630.5 779.5V820.0M631.5 768.4V820.0M632.5 734.0V820.0M632.5 820.0V839.5M633.5 760.8V820.0M633.5 820.0V899.5M634.5 820.0V829.2M635.5 787.8V820.0M635.5 820.0V835.7M636.5 820.0V839.5M637.5 768.0V820.0M638.5 820.0V899.9M640.5 790.2V820.0M641.5 820.0V885.1M642.5 778.8V820.0M643.5 761.1V820.0M644.5 820.0V878.7M647.5 820.0V898.7M648.5 820.0V846.8M650.5 820.0V880.3M651.5 743.3V820.0M652.5 811.9V820.0M653.5 770.7V820.0M653.5 820.0V881.5M654.5 820.0V849.7M655.5 820.0V879.0M656.5 800.8V820.0M656.5 820.0V827.6M657.5 820.0V869.3M658.5 820.0V893.8M659.5 775.3V820.0M659.5 820.0V846.1M660.5 820.0V846.3M661.5 779.5V820.0M662.5 766.0V820.0M663.5 811.8V820.0M664.5 781.6V820.0M666.5 820.0V852.2M668.5 769.8V820.0M669.5 820.0V831.7M670.5 820.0V880.9M671.5 795.0V820.0M675.5 820.0V851.3M676.5 820.0V867.7M677.5 820.0V858.2M678.5 762.2V820.0M678.5 820.0V850.5M679.5 820.0V837.1M680.5 793.1V820.0M680.5 820.0V881.2M681.5 779.3V820.0M683.5 771.5V820.0M684.5 812.0V820.0M684.5 820.0V842.8M688.5 801.9V820.0M688.5 820.0V823.4M690.5 767.0V820.0M690.5 820.0V867.2M691.5 804.8V820.0M692.5 820.0V838.4M693.5 820.0V833.1M694.5 820.0V859.1M695.5 770.5V820.0M698.5 779.7V820.0M698.5 820.0V860.3M699.5 820.0V866.3M700.5 786.5V820.0M702.5 796.7V820.0M702.5 820.0V849.1M704.5 793.9V820.0M704.5 820.0V871.9M705.5 776.8V820.0M705.5 820.0V849.8M706.5 778.1V820.0M708.5 785.0V820.0M708.5 820.0V888.7M709.5 820.0V839.2M711.5 774.9V820.0M713.5 792.8V820.0M713.5 820.0V872.9M714.5 820.0V843.9M715.5 775.3V820.0M715.5 820.0V849.9M716.5 787.4V820.0M717.5 820.0V859.2M718.5 754.0V820.0M718.5 820.0V856.9M719.5 785.2V820.0M723.5 799.8V820.0M724.5 773.8V820.0M724.5 820.0V834.0M725.5 766.6V820.0M725.5 820.0V860.7M726.5 765.2V820.0M726.5 820.0V881.2M727.5 820.0V881.4M728.5 820.0V839.3M729.5 820.0V848.0M730.5 795.2V820.0M731.5 820.0V888.2M732.5 760.7V820.0M733.5 820.0V857.0M734.5 789.9V820.0M734.5 820.0V856.7M736.5 776.3V820.0M736.5 820.0V857.1M737.5 820.0V870.6M738.5 820.0V862.6M739.5 820.0V844.3M740.5 802.1V820.0M740.5 820.0V856.1M741.5 800.5V820.0M741.5 820.0V857.3M742.5 787.8V820.0M742.5 820.0V848.4M743.5 820.0V838.6M747.5 795.6V820.0M748.5 773.1V820.0M749.5 777.2V820.0M749.5 820.0V854.6M750.5 771.0V820.0M751.5 770.9V820.0M752.5 792.2V820.0M754.5 776.5V820.0M755.5 802.0V820.0M755.5 820.0V842.1M756.5 777.9V820.0M756.5 820.0V838.1M757.5 820.0V834.4M760.5 820.0V827.9M761.5 820.0V874.6M762.5 802.9V820.0M763.5 820.0V844.8M764.5 812.1V820.0M764.5 820.0V846.1M765.5 820.0V863.6M769.5 820.0V839.8M771.5 794.1V820.0M773.5 791.3V820.0M773.5 820.0V861.3M774.5 767.4V820.0M774.5 820.0V864.5M775.5 763.4V820.0M775.5 820.0V892.0M778.5 767.4V820.0M778.5 820.0V885.1M780.5 768.9V820.0M781.5 784.0V820.0M784.5 820.0V866.0M788.5 820.0V830.6M789.5 799.1V820.0M789.5 820.0V881.6M790.5 762.2V820.0M791.5 767.1V820.0M794.5 820.0V830.3M796.5 811.8V820.0M797.5 820.0V823.9M798.5 820.0V833.2M799.5 820.0V875.6M800.5 775.7V820.0M802.5 775.7V820.0M802.5 820.0V843.7M806.5 749.4V820.0M806.5 820.0V856.7M807.5 771.7V820.0M807.5 820.0V862.0M808.5 820.0V870.4M809.5 762.3V820.0M809.5 820.0V853.9M810.5 766.3V820.0M810.5 820.0V864.3M812.5 777.0V820.0M813.5 798.7V820.0M813.5 820.0V852.3M814.5 781.2V820.0M815.5 801.6V820.0M818.5 774.1V820.0M818.5 820.0V850.9M819.5 773.3V820.0M820.5 794.2V820.0M820.5 820.0V833.3M821.5 786.3V820.0M822.5 783.2V820.0M823.5 766.7V820.0M824.5 790.8V820.0M825.5 820.0V856.2M826.5 820.0V898.5M827.5 761.0V820.0M827.5 820.0V849.6M829.5 820.0V859.8M830.5 802.8V820.0M830.5 820.0V865.9M832.5 820.0V884.6M833.5 798.3V820.0M834.5 777.7V820.0M835.5 748.8V820.0M835.5 820.0V860.3M837.5 756.8V820.0M838.5 777.4V820.0M839.5 820.0V833.6M840.5 734.0V820.0M841.5 780.3V820.0M841.5 820.0V840.1M843.5 820.0V844.9M844.5 820.0V856.8M845.5 761.7V820.0M845.5 820.0V841.5M846.5 807.8V820.0M847.5 820.0V871.0M848.5 792.6V820.0M848.5 820.0V864.7M849.5 807.6V820.0M849.5 820.0V837.7M851.5 781.2V820.0M852.5 759.1V820.0M853.5 756.1V820.0M854.5 770.0V820.0M854.5 820.0V859.6M855.5 820.0V908.0M856.5 820.0V863.1M859.5 820.0V865.2M860.5 807.3V820.0M860.5 820.0V864.9M861.5 820.0V866.4M862.5 820.0V850.7M864.5 811.4V820.0M865.5 820.0V883.5M866.5 820.0V874.9M869.5 820.0V890.7M871.5 820.0V865.1M872.5 820.0V894.0M873.5 820.0V897.2M874.5 742.9V820.0M878.5 762.9V820.0M880.5 763.6V820.0M881.5 782.1V820.0M881.5 820.0V870.1M882.5 769.3V820.0M883.5 745.5V820.0M884.5 815.9V820.0M884.5 820.0V852.2M885.5 820.0V861.3M886.5 772.8V820.0M886.5 820.0V903.5M887.5 820.0V852.4M888.5 784.0V820.0M888.5 820.0V840.7M889.5 820.0V849.4M890.5 774.1V820.0M892.5 775.9V820.0M893.5 807.5V820.0M894.5 794.0V820.0M895.5 763.2V820.0M895.5 820.0V848.4M896.5 779.0V820.0M896.5 820.0V874.6M898.5 820.0V859.1M900.5 771.9V820.0M900.5 820.0V831.7M901.5 820.0V877.4M902.5 784.1V820.0M902.5 820.0V838.1M903.5 771.2V820.0M904.5 810.3V820.0M906.5 810.1V820.0M906.5 820.0V855.8M908.5 795.8V820.0M910.5 734.0V820.0M910.5 820.0V830.2M912.5 820.0V860.3M914.5 807.1V820.0M914.5 820.0V850.6M916.5 774.2V820.0M916.5 820.0V836.8M917.5 820.0V864.1M919.5 803.2V820.0M919.5 820.0V882.1M920.5 774.9V820.0M920.5 820.0V839.9M921.5 766.4V820.0M922.5 779.1V820.0M922.5 820.0V876.6M924.5 798.7V820.0M924.5 820.0V845.7M925.5 820.0V845.2M926.5 820.0V849.8M928.5 820.0V863.0M929.5 761.5V820.0M929.5 820.0V854.5M930.5 797.3V820.0M931.5 800.1V820.0M931.5 820.0V871.8M932.5 794.2V820.0M933.5 810.0V820.0M933.5 820.0V857.1M935.5 817.1V820.0M935.5 820.0V837.6M936.5 820.0V872.1M937.5 820.0V840.4M940.5 812.4V820.0M942.5 754.4V820.0M943.5 785.3V820.0M945.5 820.0V877.3M947.5 798.2V820.0M949.5 744.4V820.0M949.5 820.0V835.8M951.5 763.9V820.0M951.5 820.0V865.0M953.5 820.0V881.0M954.5 820.0V833.8M955.5 773.3V820.0M956.5 779.5V820.0M956.5 820.0V849.2M957.5 820.0V867.1M958.5 820.0V867.8M959.5 820.0V853.9M960.5 793.8V820.0M960.5 820.0V845.5M961.5 806.9V820.0M961.5 820.0V835.5M962.5 802.1V820.0M963.5 796.5V820.0M964.5 775.4V820.0M965.5 772.5V820.0M965.5 820.0V834.0M966.5 820.0V836.6M967.5 820.0V844.0M968.5 807.2V820.0M968.5 820.0V840.5M969.5 820.0V841.0M970.5 770.9V820.0M971.5 820.0V873.7M972.5 820.0V872.4M973.5 772.8V820.0M973.5 820.0V853.2M974.5 820.0V860.2M975.5 820.0V846.0M977.5 820.0V826.5M978.5 785.9V820.0M978.5 820.0V858.7M979.5 820.0V827.6M980.5 791.5V820.0M981.5 780.4V820.0M981.5 820.0V868.5M982.5 820.0V843.5M986.5 805.4V820.0M987.5 771.7V820.0M988.5 755.2V820.0M988.5 820.0V896.4M989.5 764.4V820.0M989.5 820.0V836.9M991.5 768.7V820.0M991.5 820.0V836.3M994.5 820.0V886.0M996.5 820.0V880.2M997.5 778.9V820.0M997.5 820.0V830.8M998.5 793.1V820.0M998.5 820.0V842.3M1000.5 798.5V820.0M1001.5 814.4V820.0M1002.5 820.0V882.0M1003.5 779.6V820.0M1004.5 795.2V820.0M1005.5 789.9V820.0M1006.5 820.0V851.6M1007.5 779.1V820.0M1008.5 786.8V820.0M1008.5 820.0V870.2M1010.5 790.4V820.0M1011.5 808.5V820.0M1011.5 820.0V892.8M1012.5 791.2V820.0M1012.5 820.0V823.5M1014.5 775.0V820.0M1015.5 820.0V874.7M1018.5 818.6V820.0M1019.5 820.0V875.3M1020.5 820.0V874.5M1021.5 767.1V820.0M1022.5 775.3V820.0M1023.5 796.7V820.0M1023.5 820.0V882.5M1024.5 770.4V820.0M1024.5 820.0V881.4M1025.5 751.5V820.0M1027.5 785.4V820.0M1028.5 775.7V820.0M1028.5 820.0V842.5M1029.5 781.1V820.0M1029.5 820.0V864.1M1030.5 808.4V820.0M1031.5 803.8V820.0M1032.5 781.6V820.0M1032.5 820.0V859.0M1033.5 820.0V841.7M1034.5 820.0V877.3M1035.5 788.5V820.0M1036.5 820.0V870.9M1037.5 795.0V820.0M1038.5 811.2V820.0M1038.5 820.0V844.7M1039.5 820.0V860.1M1040.5 797.7V820.0M1040.5 820.0V906.9M1041.5 820.0V845.7M1043.5 759.0V820.0M1044.5 820.0V874.0M1045.5 820.0V871.9M1047.5 804.6V820.0M1047.5 820.0V872.4M1048.5 820.0V836.1M1050.5 780.5V820.0M1050.5 820.0V840.6M1051.5 781.3V820.0M1052.5 820.0V861.6M1054.5 759.9V820.0M1054.5 820.0V888.8M1056.5 820.0V908.0M1058.5 769.1V820.0M1060.5 808.7V820.0M1061.5 820.0V887.8M1062.5 820.0V857.8M1063.5 766.1V820.0M1063.5 820.0V879.6M1064.5 820.0V877.8M1065.5 794.4V820.0M1065.5 820.0V876.0M1066.5 734.0V820.0M1068.5 743.1V820.0M1068.5 820.0V882.9M1070.5 820.0V880.3M1072.5 815.4V820.0M1073.5 775.5V820.0M1073.5 820.0V852.2M1074.5 820.0V887.6M1075.5 762.5V820.0M1075.5 820.0V864.6M1076.5 793.2V820.0M1077.5 777.3V820.0M1078.5 820.0V854.2M1079.5 820.0V861.2M1081.5 782.8V820.0M1082.5 820.0V857.0M1086.5 820.0V881.9M1087.5 778.5V820.0M1087.5 820.0V852.5M1088.5 766.2V820.0M1088.5 820.0V850.3M1092.5 789.3V820.0M1092.5 820.0V835.0M1093.5 820.0V861.3M1094.5 820.0V884.1M1096.5 780.8V820.0M1097.5 799.0V820.0M1098.5 793.0V820.0M1099.5 745.6V820.0M1101.5 820.0V856.5M1102.5 820.0V873.2M1103.5 756.5V820.0M1105.5 747.4V820.0M1106.5 734.0V820.0M1107.5 765.0V820.0M1108.5 749.6V820.0M1108.5 820.0V853.2M1109.5 820.0V834.9M1110.5 757.5V820.0M1110.5 820.0V862.1M1111.5 783.4V820.0M1111.5 820.0V873.2M1112.5 820.0V875.5M1113.5 759.4V820.0M1115.5 797.5V820.0M1115.5 820.0V878.0M1116.5 760.0V820.0M1116.5 820.0V901.0M1117.5 777.1V820.0M1118.5 783.0V820.0M1118.5 820.0V881.7M1119.5 766.4V820.0M1120.5 785.1V820.0M1121.5 800.6V820.0M1122.5 820.0V841.4M1124.5 780.3V820.0M1124.5 820.0V879.1M1125.5 742.0V820.0M1125.5 820.0V887.0M1126.5 820.0V904.3M1127.5 820.0V821.5M1129.5 820.0V848.0M1131.5 820.0V869.9M1132.5 820.0V827.2M1133.5 774.8V820.0M1134.5 773.5V820.0M1134.5 820.0V881.6M1136.5 807.7V820.0M1137.5 820.0V855.3M1138.5 820.0V866.4M1139.5 820.0V839.8M1141.5 800.2V820.0M1141.5 820.0V878.9M1142.5 820.0V851.7M1143.5 804.4V820.0M1144.5 820.0V830.4M1145.5 756.8V820.0M1145.5 820.0V888.3M1148.5 776.9V820.0M1149.5 810.4V820.0M1151.5 820.0V891.6M1153.5 762.2V820.0M1153.5 820.0V840.9M1154.5 783.2V820.0M1154.5 820.0V838.3M1155.5 805.1V820.0M1155.5 820.0V896.0M1156.5 802.5V820.0M1157.5 820.0V832.3M1159.5 786.5V820.0M1160.5 820.0V857.4M1161.5 775.5V820.0M1161.5 820.0V862.6M1163.5 789.0V820.0M1163.5 820.0V844.8M1164.5 772.2V820.0M1167.5 762.9V820.0M1167.5 820.0V851.5M1169.5 778.5V820.0M1171.5 820.0V853.1M1172.5 820.0V853.5M1174.5 751.2V820.0M1175.5 786.8V820.0M1175.5 820.0V884.4M1176.5 820.0V853.9M1177.5 820.0V881.6M1178.5 820.0V900.4M1179.5 820.0V835.1M1180.5 766.8V820.0M1181.5 785.1V820.0M1181.5 820.0V892.2M1182.5 798.3V820.0M1182.5 820.0V821.6M1184.5 784.3V820.0M1186.5 820.0V874.3M1187.5 820.0V885.4M1190.5 820.0V845.2M1191.5 820.0V904.3M1193.5 770.0V820.0M1194.5 770.7V820.0M1197.5 770.9V820.0M1197.5 820.0V855.1M1201.5 785.9V820.0M1203.5 811.2V820.0M1204.5 794.4V820.0M1205.5 783.2V820.0M1206.5 820.0V854.9M1207.5 820.0V852.1M1208.5 820.0V901.2M1209.5 790.1V820.0M1210.5 796.4V820.0M1210.5 820.0V843.2M1211.5 762.5V820.0M1211.5 820.0V858.1M1212.5 820.0V865.5M1213.5 797.4V820.0M1214.5 764.7V820.0M1214.5 820.0V834.5M1216.5 799.1V820.0M1218.5 779.7V820.0M1221.5 820.0V850.3M1224.5 820.0V853.2M1225.5 764.7V820.0M1226.5 779.4V820.0M1226.5 820.0V825.6M1229.5 777.5V820.0M1229.5 820.0V826.4M1230.5 812.1V820.0M1230.5 820.0V857.9M1232.5 820.0V879.4M1233.5 810.6V820.0M1234.5 820.0V864.2M1237.5 779.2V820.0M1238.5 803.8V820.0M1238.5 820.0V839.0M1239.5 815.7V820.0M1240.5 820.0V822.0M1241.5 820.0V853.9M1245.5 760.3V820.0M1245.5 820.0V854.0M1246.5 806.3V820.0M1248.5 820.0V836.3M1249.5 820.0V858.0M1251.5 777.9V820.0M1251.5 820.0V869.2M1252.5 820.0V871.6M1253.5 784.5V820.0M1253.5 820.0V847.4M1254.5 820.0V876.4M1256.5 790.4V820.0M1256.5 820.0V861.1M1257.5 797.3V820.0M1259.5 820.0V841.3M1260.5 806.2V820.0M1260.5 820.0V835.4M1261.5 770.3V820.0M1261.5 820.0V865.4M1264.5 820.0V857.7M1265.5 820.0V885.2M1266.5 813.2V820.0M1266.5 820.0V856.7M1267.5 820.0V871.5M1268.5 788.9V820.0M1268.5 820.0V861.0M1269.5 764.6V820.0M1269.5 820.0V836.6M1270.5 820.0V834.9M1271.5 780.8V820.0M1272.5 755.5V820.0M1272.5 820.0V866.6M1273.5 820.0V866.5M1277.5 791.1V820.0M1279.5 786.8V820.0M1280.5 790.2V820.0M1281.5 793.0V820.0M1281.5 820.0V881.2M1282.5 784.7V820.0M1282.5 820.0V832.5M1283.5 789.8V820.0M1283.5 820.0V867.8M1284.5 820.0V903.5M1285.5 797.8V820.0M1285.5 820.0V893.1M1286.5 778.1V820.0M1286.5 820.0V876.0M1287.5 820.0V846.9M1290.5 790.3V820.0M1291.5 772.8V820.0M1292.5 774.9V820.0M1292.5 820.0V838.8M1293.5 820.0V903.2M1294.5 797.3V820.0M1295.5 820.0V866.4M1297.5 776.7V820.0M1297.5 820.0V841.8M1299.5 820.0V905.9M1302.5 795.9V820.0M1302.5 820.0V871.4M1305.5 772.9V820.0M1306.5 820.0V892.7M1308.5 810.1V820.0M1308.5 820.0V901.2M1313.5 820.0V899.6M1314.5 820.0V854.4M1316.5 820.0V862.0M1318.5 760.6V820.0M1318.5 820.0V843.5M1319.5 778.7V820.0M1320.5 787.6V820.0M1320.5 820.0V839.5M1321.5 820.0V847.6M1323.5 794.3V820.0M1325.5 820.0V858.5M1326.5 820.0V874.1M1328.5 754.7V820.0M1329.5 768.8V820.0M1330.5 810.7V820.0M1331.5 754.8V820.0M1331.5 820.0V903.7M1332.5 820.0V890.3M1334.5 770.6V820.0M1334.5 820.0V867.1M1335.5 806.0V820.0M1335.5 820.0V847.9M1336.5 820.0V850.5M1337.5 769.7V820.0M1337.5 820.0V879.0M1338.5 820.0V890.9M1339.5 752.8V820.0M1339.5 820.0V869.1M1340.5 762.1V820.0M1341.5 773.0V820.0M1341.5 820.0V861.2M1342.5 798.6V820.0M1342.5 820.0V876.3M1344.5 820.0V832.3M1345.5 770.9V820.0M1346.5 820.0V840.0M1347.5 770.6V820.0M1347.5 820.0V846.4M1348.5 779.4V820.0M1348.5 820.0V834.1M1349.5 773.8V820.0M1349.5 820.0V837.6M1351.5 790.8V820.0M1353.5 791.5V820.0M1353.5 820.0V862.9M1355.5 816.1V820.0M1356.5 805.6V820.0M1357.5 820.0V830.9M1359.5 785.9V820.0M1359.5 820.0V851.0" stroke="#2b3432" stroke-width="1" fill="none"/></svg>
<svg style="left:0;top:0" width="1920" height="1080"><path d="M338.5 973V991M494.5 987V991M547.5 986V991M617.5 990V991M633.5 990V991M658.5 977V991M687.5 989V991M700.5 976V991M716.5 970V991M756.5 975V991M783.5 981V991M811.5 982V991M883.5 983V991M908.5 982V991M1078.5 986V991M1103.5 979V991M1162.5 980V991M1173.5 973V991M1201.5 984V991" stroke="#2f3836" stroke-width="1.3"/></svg>
<svg style="left:0;top:0" width="1920" height="1080"><rect x="276.5" y="692.5" width="59" height="255" fill="none" stroke="#4a3d00" stroke-width="1"/><rect x="276.5" y="956.5" width="59" height="34" fill="none" stroke="#4a3d00" stroke-width="1"/><path d="M325 693h11M330 755.5h6M330 819.5h6M330 883.5h6M325 947.5h11M325 957h11" stroke="#7a6200" stroke-width="1.5"/></svg>
<div class="t" style="left:276px;top:692px;width:255px;height:60px;transform-origin:0 0;transform:translate(0px,255px) rotate(-90deg);color:#fff;font-size:14px;line-height:18px;letter-spacing:1.05px;padding-left:1px;padding-top:9px">44100 [Hz]<br>signed 16 bit</div>
<svg style="left:0;top:0" width="1920" height="1080"><g transform="translate(1677,16)"><rect x="0.5" y="1" width="12" height="14.5" fill="#fff" stroke="#7a7e7e" stroke-width="1"/><rect x="0" y="14.8" width="13" height="1.4" fill="#2a2e30"/><path d="M2.5 0.6h8" stroke="#9a9a9a" stroke-width="1"/><path d="M2 2.2l1 1.6l1-1.6l1 1.6l1-1.6l1 1.6l1-1.6l1 1.6l1-1.6l1 1.6" fill="none" stroke="#3a3a3a" stroke-width="1"/><path d="M3 7.5h3M3 9.5h1" stroke="#999" stroke-width="0.9"/><path d="M4.4 11.8L11.4 5" stroke="#cf6f16" stroke-width="4.4"/><path d="M4.4 11.8L11.4 5" stroke="#f9be6a" stroke-width="2"/><path d="M11.2 5.2L13 3.5" stroke="#8a8a8a" stroke-width="4.2"/><path d="M12.6 2.2A2.4 2.4 0 0 1 15.8 5.4Z" fill="#e8141c" stroke="#e8141c" stroke-width="1.2"/><path d="M2.6 13.4L3.6 10.6L5.6 12.5Z" fill="#1a1a1a"/></g><g transform="translate(52,609)"><rect x="0.5" y="1" width="12" height="14.5" fill="#fff" stroke="#7a7e7e" stroke-width="1"/><rect x="0" y="14.8" width="13" height="1.4" fill="#2a2e30"/><path d="M2.5 0.6h8" stroke="#9a9a9a" stroke-width="1"/><path d="M2 2.2l1 1.6l1-1.6l1 1.6l1-1.6l1 1.6l1-1.6l1 1.6l1-1.6l1 1.6" fill="none" stroke="#3a3a3a" stroke-width="1"/><path d="M3 7.5h3M3 9.5h1" stroke="#999" stroke-width="0.9"/><path d="M4.4 11.8L11.4 5" stroke="#cf6f16" stroke-width="4.4"/><path d="M4.4 11.8L11.4 5" stroke="#f9be6a" stroke-width="2"/><path d="M11.2 5.2L13 3.5" stroke="#8a8a8a" stroke-width="4.2"/><path d="M12.6 2.2A2.4 2.4 0 0 1 15.8 5.4Z" fill="#e8141c" stroke="#e8141c" stroke-width="1.2"/><path d="M2.6 13.4L3.6 10.6L5.6 12.5Z" fill="#1a1a1a"/></g><g fill="#fff" stroke="#555a5a" stroke-width="0.9"><circle cx="13.5" cy="612.5" r="1.1"/><circle cx="17.5" cy="610.5" r="1.1"/><circle cx="19.5" cy="614.5" r="1.1"/><path d="M14.3 618L16 616.3L19.5 619.8L23 616.3L24.7 618L19.5 623.6Z" stroke-linejoin="round"/></g><path d="M103.5 617.5L107.8 609.8" stroke="#7a4a0c" stroke-width="3" stroke-linecap="round"/><path d="M103.5 617.5L107.8 609.8" stroke="#d89a40" stroke-width="1.5" stroke-linecap="round"/><path d="M100.8 616.3L106.6 619.2L105.6 625.6Q99.5 626 95 620.8Z" fill="#ecdc2a" stroke="#b8a200" stroke-width="0.8" stroke-linejoin="round"/><path d="M99 621.5L104 624.5M101 619.5L105 622" stroke="#c9b400" stroke-width="0.6"/><path d="M100.9 616.6L106.3 619.3" stroke="#d8c6e8" stroke-width="1.3"/><path d="M138 614.5L141.5 617L138 619.5M150 614.5L146.5 617L150 619.5" fill="none" stroke="#2e3436" stroke-width="2.2"/><rect x="178.5" y="609.5" width="10" height="10" rx="1" fill="#fff" stroke="#646868" stroke-width="1"/><path d="M180.5 612.5h6M180.5 614.5h6M180.5 616.5h3" stroke="#777" stroke-width="0.8"/><rect x="183.5" y="614.5" width="10" height="10" rx="1" fill="#fff" stroke="#646868" stroke-width="1"/><path d="M185.5 618.5h6M185.5 620.5h6M185.5 622.5h3" stroke="#777" stroke-width="0.8"/><path d="M221.5 609.3Q220.8 614.8 226.3 617.9L228.9 617.7L222.7 609.2Z" fill="#f4f4f2" stroke="#7a7e7e" stroke-width="0.9" stroke-linejoin="round"/><path d="M234.5 609.3Q235.2 614.8 229.7 617.9L227.1 617.7L233.3 609.2Z" fill="#f4f4f2" stroke="#7a7e7e" stroke-width="0.9" stroke-linejoin="round"/><circle cx="223.4" cy="621.4" r="2.5" fill="#fff" stroke="#d42a30" stroke-width="1.9"/><circle cx="232.5" cy="621.4" r="2.5" fill="#fff" stroke="#d42a30" stroke-width="1.9"/><circle cx="223.4" cy="621.4" r="1.2" fill="#fff" stroke="#b01018" stroke-width="0.8"/><circle cx="232.5" cy="621.4" r="1.2" fill="#fff" stroke="#b01018" stroke-width="0.8"/><rect x="262.5" y="610.5" width="14" height="14" rx="1" fill="#dcaa5e" stroke="#a5670f" stroke-width="1"/><rect x="266.5" y="608.5" width="6" height="3" rx="1" fill="#eee" stroke="#555" stroke-width="1"/><rect x="267.5" y="614.5" width="10" height="10.5" rx="1" fill="#fff" stroke="#555" stroke-width="1"/><path d="M269.5 618.5h6M269.5 620.5h6M269.5 622.5h3" stroke="#777" stroke-width="0.8"/><polygon points="78.25,650.10 80.75,650.10 80.75,651.77 82.23,653.25 83.90,653.25 83.90,655.75 82.23,655.75 80.75,657.23 80.75,658.90 78.25,658.90 78.25,657.23 76.77,655.75 75.10,655.75 75.10,653.25 76.77,653.25 78.25,651.77" fill="#fff" stroke="#3a3e3e" stroke-width="0.95" stroke-linejoin="round"/><circle cx="79.5" cy="654.5" r="1.2" fill="none" stroke="#3a3e3e" stroke-width="0.9"/><polygon points="71.25,650.10 73.75,650.10 73.75,651.77 75.23,653.25 76.90,653.25 76.90,655.75 75.23,655.75 73.75,657.23 73.75,658.90 71.25,658.90 71.25,657.23 69.77,655.75 68.10,655.75 68.10,653.25 69.77,653.25 71.25,651.77" fill="#fff" stroke="#3a3e3e" stroke-width="0.95" stroke-linejoin="round"/><circle cx="72.5" cy="654.5" r="1.2" fill="none" stroke="#3a3e3e" stroke-width="0.9"/><polygon points="78.25,643.10 80.75,643.10 80.75,644.77 82.23,646.25 83.90,646.25 83.90,648.75 82.23,648.75 80.75,650.23 80.75,651.90 78.25,651.90 78.25,650.23 76.77,648.75 75.10,648.75 75.10,646.25 76.77,646.25 78.25,644.77" fill="#fff" stroke="#3a3e3e" stroke-width="0.95" stroke-linejoin="round"/><circle cx="79.5" cy="647.5" r="1.2" fill="none" stroke="#3a3e3e" stroke-width="0.9"/><g fill="none" stroke="#8d8f8f" stroke-width="1"><path d="M210.5 1024v9M212 1024v9M213 1028.5L218 1024V1033ZM218 1028.5L223 1024V1033Z"/><path d="M252 1028.5L258 1024V1033ZM258 1028.5L264 1024V1033ZM264.5 1024v9"/><path d="M296 1023.5L305 1028.5L296 1033.5Z"/><rect x="338.5" y="1024.5" width="8.5" height="8.5"/><path d="M379.5 1024V1033L385 1028.5ZM385 1024V1033L391 1028.5Z"/><path d="M420 1024V1033L426 1028.5ZM426 1024V1033L432 1028.5ZM432.5 1024v9M434 1024v9"/></g></svg>
</body></html>
